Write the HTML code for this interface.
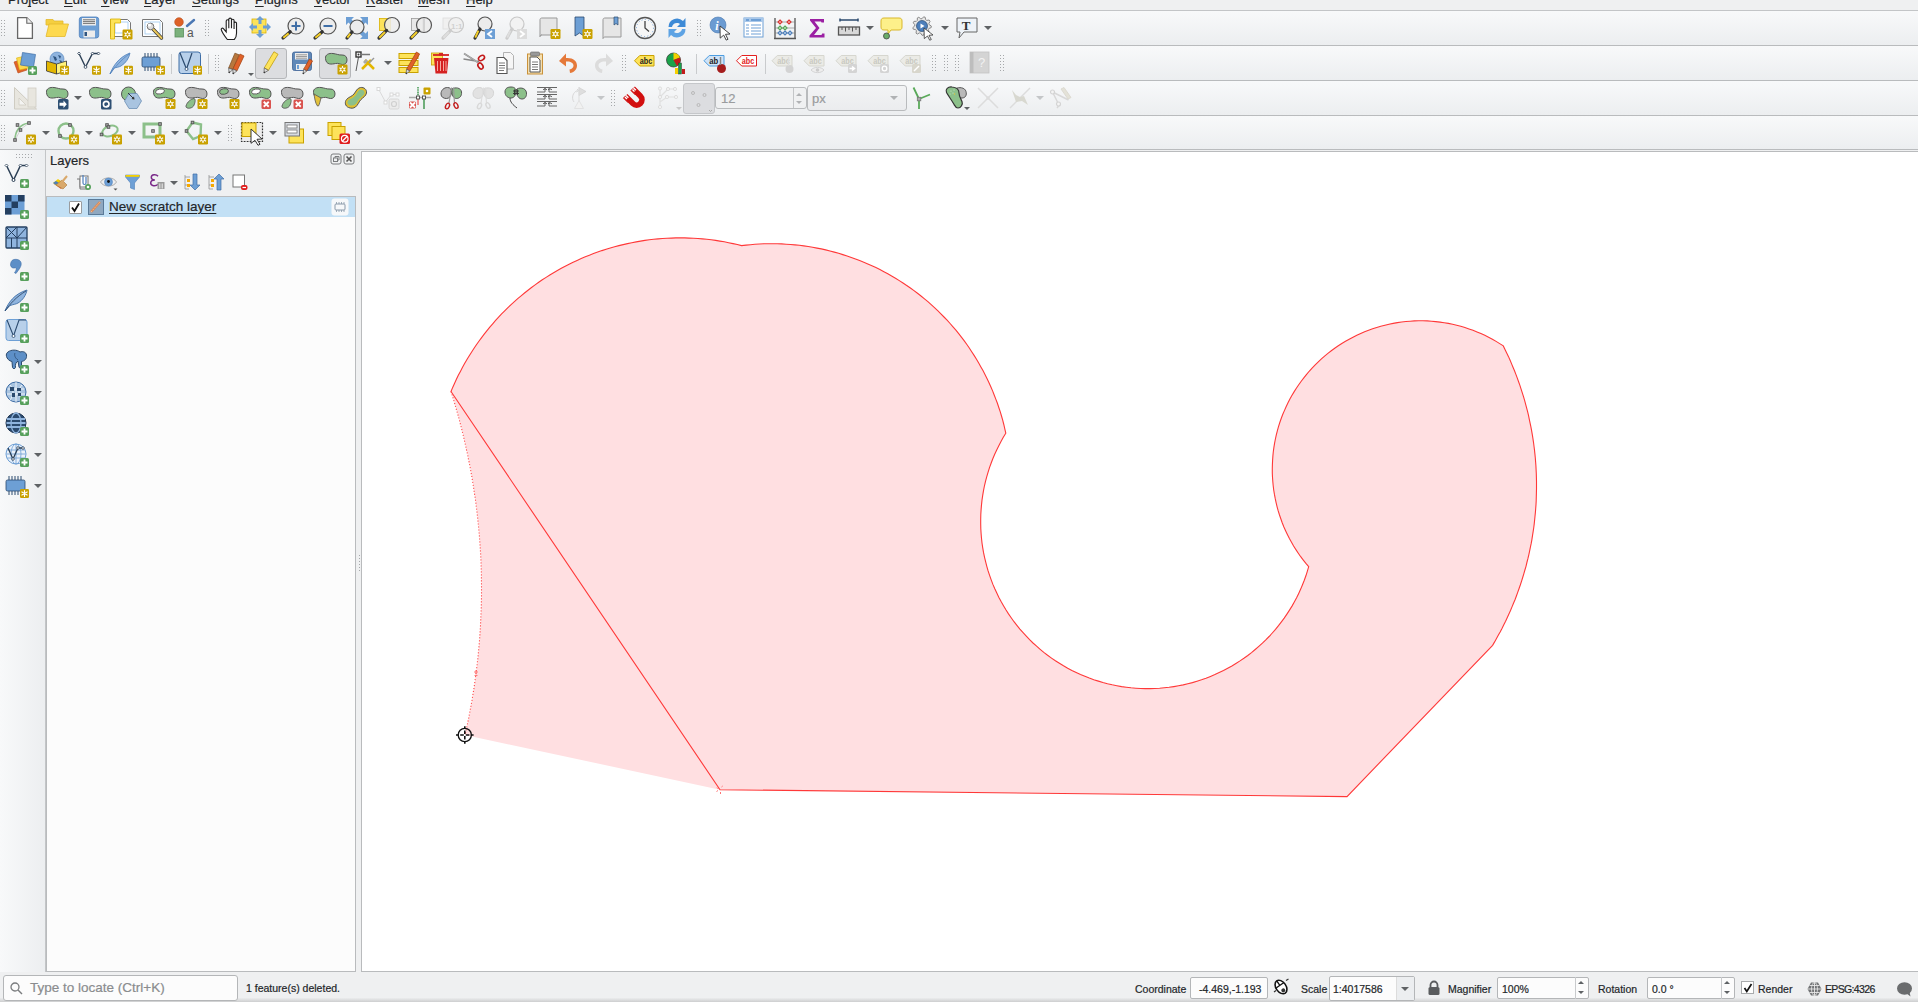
<!DOCTYPE html><html><head><meta charset="utf-8"><style>
*{box-sizing:border-box;margin:0;padding:0}
html,body{width:1918px;height:1002px;overflow:hidden;background:#eff0f1;font-family:"Liberation Sans",sans-serif;color:#232629;position:relative}
.a{position:absolute}
.tb{position:absolute;left:0;width:1918px;background:linear-gradient(#f8f9fa,#eceef0);border-bottom:1px solid #b9bbbd}
.grip{position:absolute;width:5px;background-image:radial-gradient(circle,#b5b7b9 0.8px,transparent 1.1px);background-size:4px 4px}
.vgrip{position:absolute;height:5px;background-image:radial-gradient(circle,#b5b7b9 0.8px,transparent 1.1px);background-size:4px 4px}
.dd{position:absolute;width:0;height:0;border-left:4px solid transparent;border-right:4px solid transparent;border-top:4px solid #5f6265}
.sep{position:absolute;width:1px;background:#c9cbcd}
.t{position:absolute;white-space:nowrap;line-height:1;-webkit-text-stroke:0.2px currentColor}
svg.i{position:absolute;width:24px;height:24px;overflow:visible}
.menu span{-webkit-text-stroke:0.2px #232629;position:absolute;top:-7.4px;font-size:13px;line-height:13px}
.menu u{text-decoration:underline;text-underline-offset:2.2px;text-decoration-skip-ink:none}
</style></head><body>
<div class="a" style="left:0;top:0;width:1918px;height:11px;background:#eff0f1;border-bottom:1px solid #c3c5c7"></div>
<div class="menu">
<span style="left:8px">Pro<u>j</u>ect</span>
<span style="left:64px"><u>E</u>dit</span>
<span style="left:101px"><u>V</u>iew</span>
<span style="left:144px"><u>L</u>ayer</span>
<span style="left:192px"><u>S</u>ettings</span>
<span style="left:255px"><u>P</u>lugins</span>
<span style="left:314px"><u>V</u>ector</span>
<span style="left:366px"><u>R</u>aster</span>
<span style="left:418px"><u>M</u>esh</span>
<span style="left:466px"><u>H</u>elp</span>
</div>
<div class="tb" style="top:11px;height:35px"></div>
<div class="tb" style="top:46px;height:35px"></div>
<div class="tb" style="top:81px;height:35px"></div>
<div class="tb" style="top:116px;height:34px"></div>
<div class="a" style="left:0;top:150px;width:46px;height:822px;background:linear-gradient(90deg,#f8f9fa,#eceef0)"></div>
<div class="a" style="left:46px;top:150px;width:315px;height:822px;background:#eff0f1"></div>
<div class="a" style="left:45px;top:150px;width:1px;height:822px;background:#c3c5c7"></div>
<div class="t" style="left:50px;top:153px;font-size:13px;line-height:16px">Layers</div>
<div class="a" style="left:46px;top:196px;width:310px;height:776px;background:#fcfcfc;border:1px solid #b9bbbd"></div>
<div class="a" style="left:47px;top:197px;width:308px;height:20px;background:#c2e0f5"></div>
<div class="a" style="left:361px;top:151px;width:1557px;height:821px;background:#fff;border-left:1px solid #b9bbbd;border-top:1px solid #b9bbbd;border-bottom:1px solid #b9bbbd"></div>
<svg class="a" style="left:0;top:0" width="1918" height="1002" viewBox="0 0 1918 1002">
<defs><clipPath id="mc"><rect x="362" y="152" width="1556" height="819"/></clipPath></defs><g clip-path="url(#mc)">
<path d="M451.0 391.5 L452.3 395.6 L453.6 399.8 L454.8 404.0 L456.0 408.1 L457.2 412.3 L458.4 416.5 L459.5 420.7 L460.6 424.9 L461.7 429.1 L462.7 433.3 L463.8 437.6 L464.7 441.8 L465.7 446.0 L466.6 450.3 L467.6 454.5 L468.4 458.8 L469.3 463.1 L470.1 467.3 L470.9 471.6 L471.7 475.9 L472.4 480.2 L473.1 484.5 L473.8 488.8 L474.4 493.1 L475.1 497.4 L475.7 501.7 L476.2 506.0 L476.8 510.3 L477.3 514.6 L477.8 518.9 L478.2 523.3 L478.6 527.6 L479.0 531.9 L479.4 536.2 L479.7 540.6 L480.0 544.9 L480.3 549.3 L480.6 553.6 L480.8 557.9 L481.0 562.3 L481.1 566.6 L481.3 571.0 L481.4 575.3 L481.4 579.7 L481.5 584.0 L481.5 588.4 L481.5 592.7 L481.5 597.1 L481.4 601.4 L481.3 605.8 L481.2 610.1 L481.0 614.5 L480.8 618.8 L480.6 623.1 L480.4 627.5 L480.1 631.8 L479.8 636.2 L479.5 640.5 L479.1 644.8 L478.7 649.2 L478.3 653.5 L477.9 657.8 L477.4 662.1 L476.9 666.5 L476.4 670.8 L475.8 675.1 L475.2 679.4 L474.6 683.7 L474.0 688.0 L473.3 692.3 L472.6 696.6 L471.9 700.9 L471.1 705.2 L470.3 709.5 L469.5 713.7 L468.7 718.0 L467.8 722.3 L466.9 726.5 L466.0 730.8 L465.0 735.0 L720.0 789.7 Z" fill="#ffdfe1" stroke="none"/>
<path d="M451.0 391.5 L452.7 387.4 L454.5 383.4 L456.4 379.3 L458.3 375.3 L460.4 371.4 L462.4 367.5 L464.6 363.6 L466.8 359.8 L469.1 356.0 L471.5 352.2 L473.9 348.5 L476.4 344.8 L478.9 341.2 L481.6 337.6 L484.2 334.1 L487.0 330.6 L489.8 327.2 L492.7 323.8 L495.6 320.4 L498.6 317.2 L501.6 313.9 L504.7 310.8 L507.9 307.7 L511.1 304.6 L514.4 301.6 L517.7 298.7 L521.1 295.8 L524.5 293.0 L528.0 290.2 L531.5 287.5 L535.1 284.9 L538.7 282.3 L542.3 279.8 L546.1 277.4 L549.8 275.0 L553.6 272.7 L557.4 270.5 L561.3 268.3 L565.2 266.2 L569.1 264.2 L573.1 262.3 L577.1 260.4 L581.2 258.6 L585.3 256.8 L589.4 255.2 L593.5 253.6 L597.7 252.1 L601.9 250.6 L606.1 249.3 L610.3 248.0 L614.6 246.8 L618.9 245.6 L623.2 244.6 L627.5 243.6 L631.8 242.7 L636.2 241.9 L640.5 241.1 L644.9 240.4 L649.3 239.8 L653.7 239.3 L658.1 238.9 L662.5 238.5 L667.0 238.3 L671.4 238.1 L675.8 237.9 L680.2 237.9 L684.7 237.9 L689.1 238.1 L693.5 238.3 L697.9 238.5 L702.4 238.9 L706.8 239.3 L711.2 239.8 L715.6 240.4 L719.9 241.1 L724.3 241.8 L728.6 242.7 L733.0 243.6 L737.3 244.5 L741.6 245.6 L746.0 245.1 L750.5 244.7 L754.9 244.3 L759.3 244.0 L763.8 243.8 L768.2 243.7 L772.7 243.7 L777.2 243.8 L781.6 243.9 L786.1 244.2 L790.5 244.5 L794.9 244.9 L799.4 245.3 L803.8 245.9 L808.2 246.5 L812.6 247.3 L817.0 248.1 L821.3 248.9 L825.7 249.9 L830.0 251.0 L834.3 252.1 L838.6 253.3 L842.8 254.6 L847.1 255.9 L851.3 257.4 L855.5 258.9 L859.6 260.5 L863.8 262.2 L867.8 263.9 L871.9 265.7 L875.9 267.6 L879.9 269.6 L883.9 271.7 L887.8 273.8 L891.6 276.0 L895.5 278.3 L899.3 280.6 L903.0 283.0 L906.7 285.5 L910.4 288.0 L914.0 290.6 L917.5 293.3 L921.0 296.0 L924.5 298.8 L927.9 301.7 L931.2 304.7 L934.5 307.6 L937.7 310.7 L940.9 313.8 L944.0 317.0 L947.1 320.2 L950.1 323.5 L953.0 326.8 L955.9 330.2 L958.7 333.7 L961.4 337.2 L964.1 340.7 L966.7 344.3 L969.3 348.0 L971.7 351.7 L974.1 355.4 L976.5 359.2 L978.7 363.0 L980.9 366.9 L983.1 370.8 L985.1 374.7 L987.1 378.7 L989.0 382.7 L990.8 386.8 L992.6 390.9 L994.2 395.0 L995.8 399.1 L997.4 403.3 L998.8 407.5 L1000.2 411.7 L1001.5 416.0 L1002.7 420.2 L1003.8 424.5 L1004.8 428.9 L1005.8 433.2 L1003.3 437.3 L1001.0 441.4 L998.8 445.7 L996.7 450.0 L994.7 454.3 L992.8 458.7 L991.1 463.2 L989.5 467.6 L988.1 472.2 L986.7 476.8 L985.5 481.4 L984.4 486.0 L983.5 490.7 L982.7 495.4 L982.0 500.1 L981.5 504.9 L981.1 509.6 L980.8 514.4 L980.7 519.2 L980.7 523.9 L980.8 528.7 L981.1 533.5 L981.5 538.2 L982.0 543.0 L982.7 547.7 L983.5 552.4 L984.5 557.1 L985.6 561.7 L986.8 566.3 L988.1 570.9 L989.6 575.4 L991.2 579.9 L992.9 584.4 L994.8 588.8 L996.8 593.1 L998.9 597.4 L1001.1 601.6 L1003.5 605.8 L1005.9 609.8 L1008.5 613.9 L1011.2 617.8 L1014.0 621.7 L1016.9 625.4 L1019.9 629.1 L1023.1 632.7 L1026.3 636.2 L1029.6 639.7 L1033.0 643.0 L1036.6 646.2 L1040.2 649.3 L1043.8 652.4 L1047.6 655.3 L1051.5 658.1 L1055.4 660.8 L1059.4 663.3 L1063.5 665.8 L1067.7 668.2 L1071.9 670.4 L1076.2 672.5 L1080.5 674.5 L1084.9 676.3 L1089.3 678.1 L1093.8 679.7 L1098.4 681.1 L1102.9 682.5 L1107.5 683.7 L1112.2 684.8 L1116.9 685.7 L1121.6 686.6 L1126.3 687.2 L1131.0 687.8 L1135.8 688.2 L1140.5 688.5 L1145.3 688.6 L1150.1 688.6 L1154.8 688.5 L1159.6 688.2 L1164.3 687.8 L1169.1 687.3 L1173.8 686.6 L1178.5 685.8 L1183.2 684.9 L1187.8 683.8 L1192.4 682.6 L1197.0 681.2 L1201.5 679.8 L1206.0 678.2 L1210.5 676.4 L1214.9 674.6 L1219.2 672.6 L1223.5 670.5 L1227.7 668.3 L1231.9 666.0 L1235.9 663.5 L1240.0 660.9 L1243.9 658.3 L1247.8 655.5 L1251.5 652.6 L1255.2 649.5 L1258.8 646.4 L1262.4 643.2 L1265.8 639.9 L1269.1 636.5 L1272.3 633.0 L1275.5 629.4 L1278.5 625.7 L1281.4 621.9 L1284.2 618.1 L1286.9 614.1 L1289.5 610.1 L1292.0 606.1 L1294.3 601.9 L1296.6 597.7 L1298.7 593.4 L1300.7 589.1 L1302.5 584.7 L1304.3 580.3 L1305.9 575.8 L1307.3 571.3 L1308.7 566.7 L1305.9 563.4 L1303.3 560.1 L1300.7 556.7 L1298.3 553.2 L1295.9 549.6 L1293.6 546.0 L1291.5 542.3 L1289.4 538.6 L1287.5 534.7 L1285.7 530.9 L1283.9 527.0 L1282.3 523.0 L1280.9 519.0 L1279.5 515.0 L1278.2 510.9 L1277.1 506.8 L1276.1 502.6 L1275.2 498.4 L1274.4 494.2 L1273.7 490.0 L1273.2 485.8 L1272.8 481.5 L1272.5 477.3 L1272.3 473.0 L1272.3 468.7 L1272.4 464.4 L1272.6 460.2 L1272.9 455.9 L1273.3 451.7 L1273.9 447.4 L1274.6 443.2 L1275.4 439.0 L1276.3 434.9 L1277.4 430.7 L1278.5 426.6 L1279.8 422.5 L1281.2 418.5 L1282.7 414.5 L1284.4 410.6 L1286.1 406.7 L1288.0 402.8 L1289.9 399.0 L1292.0 395.3 L1294.2 391.6 L1296.5 388.0 L1298.9 384.5 L1301.4 381.0 L1304.0 377.6 L1306.6 374.3 L1309.4 371.0 L1312.3 367.9 L1315.2 364.8 L1318.3 361.8 L1321.4 358.9 L1324.6 356.1 L1327.9 353.4 L1331.3 350.8 L1334.7 348.2 L1338.3 345.8 L1341.8 343.5 L1345.5 341.3 L1349.2 339.2 L1353.0 337.2 L1356.8 335.3 L1360.7 333.5 L1364.6 331.8 L1368.6 330.3 L1372.6 328.8 L1376.7 327.5 L1380.8 326.3 L1384.9 325.2 L1389.0 324.2 L1393.2 323.4 L1397.4 322.6 L1401.6 322.0 L1405.9 321.5 L1410.1 321.2 L1414.4 320.9 L1418.7 320.8 L1422.9 320.8 L1427.2 320.9 L1431.5 321.2 L1435.7 321.6 L1440.0 322.1 L1444.2 322.7 L1448.4 323.4 L1452.6 324.3 L1456.7 325.2 L1460.8 326.3 L1464.9 327.5 L1469.0 328.9 L1473.0 330.3 L1477.0 331.9 L1480.9 333.6 L1484.8 335.3 L1488.6 337.2 L1492.4 339.2 L1496.1 341.4 L1499.7 343.6 L1503.3 345.9 L1505.0 349.4 L1506.7 352.9 L1508.4 356.4 L1510.0 360.0 L1511.5 363.6 L1513.0 367.2 L1514.5 370.8 L1515.9 374.4 L1517.3 378.1 L1518.6 381.8 L1519.9 385.4 L1521.1 389.1 L1522.3 392.9 L1523.5 396.6 L1524.6 400.3 L1525.6 404.1 L1526.6 407.9 L1527.6 411.7 L1528.5 415.4 L1529.3 419.3 L1530.1 423.1 L1530.9 426.9 L1531.6 430.7 L1532.3 434.6 L1532.9 438.4 L1533.5 442.3 L1534.0 446.2 L1534.5 450.1 L1534.9 453.9 L1535.3 457.8 L1535.6 461.7 L1535.9 465.6 L1536.1 469.5 L1536.3 473.4 L1536.4 477.3 L1536.5 481.2 L1536.5 485.1 L1536.5 489.0 L1536.4 492.9 L1536.3 496.8 L1536.2 500.7 L1536.0 504.6 L1535.7 508.5 L1535.4 512.4 L1535.0 516.3 L1534.6 520.2 L1534.2 524.1 L1533.7 528.0 L1533.1 531.8 L1532.5 535.7 L1531.9 539.6 L1531.2 543.4 L1530.4 547.2 L1529.6 551.1 L1528.8 554.9 L1527.9 558.7 L1526.9 562.5 L1526.0 566.3 L1524.9 570.0 L1523.8 573.8 L1522.7 577.5 L1521.5 581.3 L1520.3 585.0 L1519.0 588.7 L1517.7 592.4 L1516.4 596.0 L1515.0 599.7 L1513.5 603.3 L1512.0 606.9 L1510.5 610.5 L1508.9 614.1 L1507.2 617.7 L1505.6 621.2 L1503.8 624.7 L1502.1 628.2 L1500.3 631.7 L1498.4 635.1 L1496.5 638.5 L1494.6 641.9 L1492.6 645.3 L1347.0 796.6 L720.0 789.7 L451.0 391.5 Z" fill="#ffdfe1" stroke="#ff3838" stroke-width="1.1"/>
<path d="M451.0 391.5 L452.3 395.6 L453.6 399.8 L454.8 404.0 L456.0 408.1 L457.2 412.3 L458.4 416.5 L459.5 420.7 L460.6 424.9 L461.7 429.1 L462.7 433.3 L463.8 437.6 L464.7 441.8 L465.7 446.0 L466.6 450.3 L467.6 454.5 L468.4 458.8 L469.3 463.1 L470.1 467.3 L470.9 471.6 L471.7 475.9 L472.4 480.2 L473.1 484.5 L473.8 488.8 L474.4 493.1 L475.1 497.4 L475.7 501.7 L476.2 506.0 L476.8 510.3 L477.3 514.6 L477.8 518.9 L478.2 523.3 L478.6 527.6 L479.0 531.9 L479.4 536.2 L479.7 540.6 L480.0 544.9 L480.3 549.3 L480.6 553.6 L480.8 557.9 L481.0 562.3 L481.1 566.6 L481.3 571.0 L481.4 575.3 L481.4 579.7 L481.5 584.0 L481.5 588.4 L481.5 592.7 L481.5 597.1 L481.4 601.4 L481.3 605.8 L481.2 610.1 L481.0 614.5 L480.8 618.8 L480.6 623.1 L480.4 627.5 L480.1 631.8 L479.8 636.2 L479.5 640.5 L479.1 644.8 L478.7 649.2 L478.3 653.5 L477.9 657.8 L477.4 662.1 L476.9 666.5 L476.4 670.8 L475.8 675.1 L475.2 679.4 L474.6 683.7 L474.0 688.0 L473.3 692.3 L472.6 696.6 L471.9 700.9 L471.1 705.2 L470.3 709.5 L469.5 713.7 L468.7 718.0 L467.8 722.3 L466.9 726.5 L466.0 730.8 L465.0 735.0" fill="none" stroke="#ff4a4a" stroke-width="1.1" stroke-dasharray="1.1 1.9"/>
<g stroke="#111" fill="none"><circle cx="464.8" cy="735" r="6.6" stroke-width="1.35"/><path d="M464.8 726.2v2.8M464.8 741v2.8M456 735h2.8M470.8 735h2.8" stroke-width="1.6"/><path d="M464.8 730.4v3.6M464.8 736v3.6M460.2 735h3.6M465.8 735h3.6" stroke-width="1.6"/></g>
<path d="M474 672h4M476 670v4M474.5 675.5h3" stroke="#ff6060" stroke-width=".8" fill="none"/>
<path d="M717 787.5l1.5 1.5M721.5 787l1.2-1M716.5 791.5l1.5-1M720.5 792v2" stroke="#ff5050" stroke-width=".8"/>
</g></svg>
<div class="dd" style="left:866px;top:26px"></div>
<div class="dd" style="left:941px;top:26px"></div>
<div class="dd" style="left:984px;top:26px"></div>
<div class="sep" style="left:171px;top:54px;height:20px"></div>
<div class="sep" style="left:208px;top:54px;height:20px"></div>
<div class="sep" style="left:696px;top:54px;height:20px"></div>
<div class="sep" style="left:765px;top:54px;height:20px"></div>
<div class="a" style="left:255px;top:48px;width:32px;height:31px;background:#dcdde0;border:1px solid #b5b7ba;border-radius:3px"></div>
<div class="a" style="left:319px;top:48px;width:32px;height:31px;background:#dcdde0;border:1px solid #b5b7ba;border-radius:3px"></div>
<div class="dd" style="left:384px;top:61px"></div>
<div class="dd" style="left:248px;top:73px;border-width:3px 3px 0 3px"></div>
<div class="dd" style="left:74px;top:96px"></div>
<div class="dd" style="left:597px;top:96px;border-top-color:#c4c6c8"></div>
<div class="dd" style="left:1036px;top:96px;border-top-color:#c4c6c8"></div>
<div class="dd" style="left:676px;top:107px;border-width:3px 3px 0 3px;border-top-color:#c8c8c8"></div>
<div class="dd" style="left:964px;top:107px;border-width:3px 3px 0 3px"></div>
<div class="a" style="left:683px;top:83px;width:32px;height:31px;background:#dcdde0;border:1px solid #c5c7ca;border-radius:3px"></div>
<svg class="a" style="left:683px;top:83px" width="32" height="31"><g fill="none" stroke="#b8b8b8" stroke-width="1"><circle cx="10" cy="10" r="1.5"/><circle cx="21.5" cy="12" r="1.5"/><circle cx="15.5" cy="22" r="1.5"/></g><path d="M26 27l1.5 1.5 1.5-1.5" stroke="#aaa" fill="none"/></svg>
<div class="a" style="left:715px;top:87px;width:92px;height:22px;background:#f0f1f2;border:1px solid #b9bbbd;border-radius:3px"></div>
<div class="a" style="left:793px;top:88px;width:1px;height:20px;background:#c4c6c8"></div>
<div class="dd" style="left:796px;top:93px;border-width:0 3.5px 3.5px 3.5px;border-top:0;border-bottom:3.5px solid #b0b2b4"></div>
<div class="dd" style="left:796px;top:101px;border-width:3.5px 3.5px 0 3.5px;border-top-color:#b0b2b4"></div>
<div class="t" style="left:721px;top:92px;font-size:13px;color:#9a9c9e">12</div>
<div class="a" style="left:807px;top:85px;width:100px;height:26px;background:linear-gradient(#f3f4f5,#ebecee);border:1px solid #b9bbbd;border-radius:3px"></div>
<div class="t" style="left:812px;top:92px;font-size:13px;color:#9a9c9e">px</div>
<div class="dd" style="left:890px;top:96px;border-top-color:#b0b2b4"></div>
<div class="dd" style="left:42px;top:131px"></div>
<div class="dd" style="left:85px;top:131px"></div>
<div class="dd" style="left:128px;top:131px"></div>
<div class="dd" style="left:171px;top:131px"></div>
<div class="dd" style="left:214px;top:131px"></div>
<div class="dd" style="left:269px;top:131px"></div>
<div class="dd" style="left:312px;top:131px"></div>
<div class="dd" style="left:355px;top:131px"></div>
<div class="dd" style="left:34px;top:360px"></div>
<div class="dd" style="left:34px;top:391px"></div>
<div class="dd" style="left:34px;top:453px"></div>
<div class="dd" style="left:34px;top:484px"></div>
<div class="dd" style="left:170px;top:181px"></div>
<svg class="a" style="left:330px;top:153px" width="26" height="13"><rect x="1" y="1" width="10" height="10" rx="2" fill="none" stroke="#7a7c7e" stroke-width="1"/><rect x="3.5" y="5" width="4" height="3.5" fill="none" stroke="#7a7c7e" stroke-width="1"/><path d="M5 5V3.5h4v3.5H7.5" fill="none" stroke="#7a7c7e" stroke-width="1"/><rect x="14" y="1" width="10" height="10" rx="2" fill="none" stroke="#7a7c7e" stroke-width="1"/><path d="M16.5 3.5l5 5M21.5 3.5l-5 5" stroke="#555" stroke-width="1.6"/></svg>
<div class="a" style="left:69px;top:201px;width:13px;height:13px;background:#fff;border:1px solid #9a9c9e;border-radius:1px"></div>
<svg class="a" style="left:70px;top:202px" width="11" height="11"><path d="M2 5.5l2.5 3.5L9 1.5" fill="none" stroke="#111" stroke-width="1.8"/></svg>
<svg class="a" style="left:88px;top:199px" width="16" height="16"><rect x="0.5" y="0.5" width="15" height="15" fill="#8fa8c0" stroke="#5a7a98" stroke-width="1"/><path d="M3 13l9-10" stroke="#d98a5a" stroke-width="2.5"/><path d="M3 13l9-10" stroke="#f0c090" stroke-width="1" stroke-dasharray="1.5 1"/></svg>
<div class="t" style="left:109px;top:200px;font-size:13.5px;text-decoration:underline;text-underline-offset:2px">New scratch layer</div>
<svg class="a" style="left:331px;top:198px" width="18" height="18"><rect x="0.5" y="0.5" width="17" height="17" rx="3" fill="#f6f8fa"/><rect x="4" y="6" width="10" height="6" rx="1" fill="none" stroke="#8a9aaa" stroke-width="1"/><path d="M5.5 4v2M8 4v2M10.5 4v2M13 4v2M5.5 12v2M8 12v2M10.5 12v2M13 12v2" stroke="#8a9aaa" stroke-width=".8"/></svg>
<div class="a" style="left:0;top:998px;width:1918px;height:4px;background:linear-gradient(#ebeced,#cdcecf)"></div>
<div class="a" style="left:3px;top:975px;width:235px;height:26px;background:#fcfcfc;border:1px solid #b4b6b8;border-radius:3px"></div>
<svg class="a" style="left:10px;top:982px" width="14" height="13"><circle cx="5" cy="5" r="4" fill="none" stroke="#7a7c7e" stroke-width="1.3"/><path d="M8 8l4 4" stroke="#7a7c7e" stroke-width="1.5"/></svg>
<div class="t" style="left:30px;top:981px;font-size:13.5px;color:#8a8c8e">Type to locate (Ctrl+K)</div>
<div class="t" style="left:246px;top:983px;font-size:10.5px">1 feature(s) deleted.</div>
<div class="t" style="left:1135px;top:984px;font-size:10.5px">Coordinate</div>
<div class="a" style="left:1190px;top:977px;width:78px;height:22px;background:#fcfcfc;border:1px solid #b4b6b8;border-radius:2px"></div>
<div class="t" style="left:1199px;top:984px;font-size:10.5px">-4.469,-1.193</div>
<div class="t" style="left:1301px;top:984px;font-size:10.5px">Scale</div>
<div class="a" style="left:1329px;top:976px;width:86px;height:25px;background:#fcfcfc;border:1px solid #b4b6b8;border-radius:2px"></div>
<div class="a" style="left:1396px;top:977px;width:18px;height:23px;background:#eceef0;border-left:1px solid #dcdcdc"></div>
<div class="dd" style="left:1401px;top:987px;border-width:4px 4px 0 4px"></div>
<div class="t" style="left:1333px;top:984px;font-size:10.5px">1:4017586</div>
<div class="t" style="left:1448px;top:984px;font-size:10.5px">Magnifier</div>
<div class="a" style="left:1497px;top:977px;width:92px;height:22px;background:#fcfcfc;border:1px solid #b4b6b8;border-radius:2px"></div>
<div class="a" style="left:1575px;top:977px;width:1px;height:22px;background:#c9cbcd"></div>
<div class="t" style="left:1502px;top:984px;font-size:10.5px">100%</div>
<div class="t" style="left:1598px;top:984px;font-size:10.5px">Rotation</div>
<div class="a" style="left:1647px;top:977px;width:88px;height:22px;background:#fcfcfc;border:1px solid #b4b6b8;border-radius:2px"></div>
<div class="a" style="left:1721px;top:977px;width:1px;height:22px;background:#c9cbcd"></div>
<div class="t" style="left:1652px;top:984px;font-size:10.5px">0.0 °</div>
<div class="a" style="left:1741px;top:981px;width:13px;height:13px;background:#fff;border:1px solid #a9abad"></div>
<svg class="a" style="left:1742px;top:982px" width="12" height="12"><path d="M2.5 6l2.3 3.5L9.5 2" fill="none" stroke="#111" stroke-width="1.7"/></svg>
<div class="t" style="left:1758px;top:984px;font-size:10.5px">Render</div>
<div class="t" style="left:1825px;top:984px;font-size:10.5px;letter-spacing:-0.65px">EPSG:4326</div>
<svg class="a" style="left:1270px;top:976px" width="22" height="22"><g transform="rotate(-35 11 11)"><ellipse cx="11" cy="11" rx="5" ry="7.5" fill="#fff" stroke="#111" stroke-width="1.6"/><path d="M6 9h10M11 3.5V9" stroke="#111" stroke-width="1.4"/><circle cx="11" cy="15" r="2" fill="#333"/></g><path d="M4 16l2-1.5M16 4.5l2.5-1.5" stroke="#333" stroke-width="1.2"/></svg>
<svg class="a" style="left:1427px;top:980px" width="14" height="16"><path d="M3.5 7V5a3.5 3.5 0 0 1 7 0v2" fill="none" stroke="#5a5c5e" stroke-width="1.8"/><rect x="1.5" y="7" width="11" height="8" rx="1.5" fill="#5a5c5e"/></svg>
<div class="dd" style="left:1578px;top:981px;border-width:0 3.5px 3.5px 3.5px;border-top:0;border-bottom:3.5px solid #5f6265"></div>
<div class="dd" style="left:1578px;top:991px;border-width:3.5px 3.5px 0 3.5px"></div>
<div class="dd" style="left:1724px;top:981px;border-width:0 3.5px 3.5px 3.5px;border-top:0;border-bottom:3.5px solid #5f6265"></div>
<div class="dd" style="left:1724px;top:991px;border-width:3.5px 3.5px 0 3.5px"></div>
<svg class="a" style="left:1806px;top:981px" width="17" height="16"><path d="M5 1.5h7l3.5 6.5-3.5 6.5H5L1.5 8z" fill="#727476"/><path d="M1.5 8h14M8.5 1.5v13M3.5 4.5h10M3.5 11.5h10" stroke="#e8e8e8" stroke-width=".9"/><ellipse cx="8.5" cy="8" rx="3" ry="6.5" fill="none" stroke="#e8e8e8" stroke-width=".8"/></svg>
<svg class="a" style="left:1896px;top:981px" width="18" height="17"><ellipse cx="8.5" cy="7.5" rx="7.5" ry="6.2" fill="#6a6c6e"/><path d="M10 12l4.5 3.5-1-4.5z" fill="#6a6c6e"/></svg>
<svg class="a" style="left:0;top:0" width="1918" height="1002">
<g transform="translate(13 16)"><path d="M4.6 1.6h9.2l5.6 5.6v15.2h-14.8z" fill="#fff" stroke="#666" stroke-width="1.3" stroke-linejoin="round"/><path d="M13.8 1.6v5.6h5.6" fill="#f0f0f0" stroke="#666" stroke-width="1.1"/></g>
<g transform="translate(45 16)"><path d="M1 3.5h7l1 1.5h9v4h-17z" fill="#f5cf40" stroke="#e3b92c" stroke-width=".8"/><path d="M4 8h19.5l-3.5 12.5h-19z" fill="#fdd94f" stroke="#e3b92c" stroke-width=".8"/></g>
<g transform="translate(77 16)"><rect x="2.3" y="1" width="19.4" height="21" rx="2.5" fill="#6d9fd5" stroke="#4d7fbb" stroke-width=".8"/><rect x="5" y="2" width="14" height="7.5" fill="#ececec"/><path d="M6 3.8h12M6 5.6h12M6 7.4h12" stroke="#555" stroke-width=".8"/><rect x="6.5" y="14.5" width="11.5" height="7" fill="#ececec"/><rect x="7.5" y="16" width="2.5" height="4" fill="#2f5580"/></g>
<g transform="translate(109 16)"><path d="M1.5 3.5h17l3 3v14h-20z" fill="#fff" stroke="#777" stroke-width="1"/><rect x="6" y="6" width="13" height="11" fill="none" stroke="#9cc8f0" stroke-width=".8"/><path d="M1.5 3h10v4h-6v16h-4z" fill="#fde35a" stroke="#d9b100" stroke-width=".8"/><rect x="13.5" y="13.5" width="10" height="10" rx="1.2" fill="#c9a100"/><g stroke="#fff" stroke-width="1.1"><path d="M18.5 14.9v7.2M15.4 16.7l6.2 3.6M15.4 20.3l6.2 -3.6"/></g><circle cx="18.5" cy="18.5" r="1.7" fill="#c9a100" stroke="#fff" stroke-width="1"/></g>
<g transform="translate(141 16)"><path d="M1.5 3.5h17l3 3v14h-20z" fill="#fff" stroke="#777" stroke-width="1"/><rect x="4" y="6" width="15" height="12" fill="none" stroke="#9cc8f0" stroke-width=".8"/><path d="M11 12l9.5 10" stroke="#333" stroke-width="3.4" stroke-linecap="round"/><path d="M11 12l9.5 10" stroke="#e8c65a" stroke-width="2" stroke-linecap="round"/><circle cx="9.5" cy="10.5" r="3.3" fill="#ddd" stroke="#777" stroke-width="1"/><circle cx="8.5" cy="9" r="1.6" fill="#fff"/></g>
<g transform="translate(173 16)"><circle cx="6" cy="6" r="4.3" fill="#dd6127" stroke="#b84a18" stroke-width=".6"/><path d="M14 10l7-6" stroke="#4b78b4" stroke-width="2.4" stroke-linecap="round"/><rect x="2" y="12.5" width="8.5" height="8.5" fill="#7bb17c" stroke="#5a8f5c" stroke-width=".8"/><text x="14" y="21" font-size="12" font-family="Liberation Sans" fill="#555">a</text></g>
<g transform="translate(217 16)"><g transform="translate(2.5 0) scale(1.12)"><path d="M7 21c-2-2.5-5-7-5.5-9 0-1.2 1.2-1.6 2-.8l2.5 3V4.5c0-1.5 2.3-1.5 2.3 0V11V3c0-1.5 2.4-1.5 2.4 0v8V4c0-1.5 2.3-1.5 2.3 0v7.5V6.5c0-1.4 2.2-1.4 2.2 0v9c0 2.5-1 4.5-2 5.5z" fill="#fff" stroke="#222" stroke-width="1"/></g></g>
<g transform="translate(249 16)"><rect x="3" y="3" width="14" height="14" fill="#fde35a" stroke="#d9b100" stroke-width=".8"/><g fill="#6d9fd5"><path d="M11 0l-4 4h2.5v4h3V4H15z"/><path d="M11 22l-4-4h2.5v-4h3v4H15z"/><path d="M0 11l4-4v2.5h4v3H4V15z"/><path d="M22 11l-4-4v2.5h-4v3h4V15z"/></g></g>
<g transform="translate(281 16)"><circle cx="15" cy="10" r="8" fill="#ececec" stroke="#555" stroke-width="1.2"/><path d="M9.24 15.76L2 22" stroke="#333" stroke-width="3.2" stroke-linecap="round"/><path d="M7.64 17.36L2.3 21.7" stroke="#f4cf2a" stroke-width="2" stroke-linecap="butt"/><path d="M15 5.5v9M10.5 10h9" stroke="#3f6ea6" stroke-width="2"/></g>
<g transform="translate(313 16)"><circle cx="15" cy="10" r="8" fill="#ececec" stroke="#555" stroke-width="1.2"/><path d="M9.24 15.76L2 22" stroke="#333" stroke-width="3.2" stroke-linecap="round"/><path d="M7.64 17.36L2.3 21.7" stroke="#f4cf2a" stroke-width="2" stroke-linecap="butt"/><path d="M10.5 10h9" stroke="#3f6ea6" stroke-width="2"/></g>
<g transform="translate(345 16)"><g fill="#6d9fd5"><path d="M1 1h8l-2.5 2.5 3 3-3 3-3-3L1 9z"/><path d="M23 1h-8l2.5 2.5-3 3 3 3 3-3L23 9z"/><path d="M23 23h-8l2.5-2.5-3-3 3-3 3 3 2.5-2.5z"/></g><circle cx="12" cy="11" r="7" fill="#ececec" stroke="#555" stroke-width="1.2"/><path d="M6.96 16.04L2 22" stroke="#333" stroke-width="3.2" stroke-linecap="round"/><path d="M5.36 17.64L2.3 21.7" stroke="#f4cf2a" stroke-width="2" stroke-linecap="butt"/></g>
<g transform="translate(377 16)"><rect x="2.5" y="2.5" width="11" height="12" fill="#fde35a" stroke="#d9b100" stroke-width=".8"/><circle cx="15" cy="9" r="7.5" fill="rgba(236,236,236,.85)" stroke="#555" stroke-width="1.2"/><path d="M9.6 14.4L2 22" stroke="#333" stroke-width="3.2" stroke-linecap="round"/><path d="M8 16L2.3 21.7" stroke="#f4cf2a" stroke-width="2" stroke-linecap="butt"/></g>
<g transform="translate(409 16)"><rect x="2.5" y="2.5" width="11" height="12" fill="#e8e8e8" stroke="#999" stroke-width=".8"/><circle cx="15" cy="9" r="7.5" fill="rgba(236,236,236,.9)" stroke="#555" stroke-width="1.2"/><path d="M9.6 14.4L2 22" stroke="#333" stroke-width="3.2" stroke-linecap="round"/><path d="M8 16L2.3 21.7" stroke="#f4cf2a" stroke-width="2" stroke-linecap="butt"/><path d="M15 2v14" stroke="#aaa" stroke-width=".8"/></g>
<g transform="translate(441 16)"><rect x="2" y="2" width="9" height="11" fill="#f0f0f0" stroke="#ddd" stroke-width=".8"/><circle cx="15" cy="9" r="7.5" fill="#f0f0f0" stroke="#c8c8c8" stroke-width="1.2"/><path d="M9.6 14.4L2 22" stroke="#ccc" stroke-width="3.2" stroke-linecap="round"/><path d="M8 16L2.3 21.7" stroke="#dedede" stroke-width="2" stroke-linecap="butt"/><text x="10" y="12.5" font-size="8" font-weight="bold" font-family="Liberation Sans" fill="#d0d0d0">1:1</text></g>
<g transform="translate(473 16)"><circle cx="12" cy="8" r="7" fill="#ececec" stroke="#555" stroke-width="1.2"/><path d="M6.96 13.04L2 22" stroke="#333" stroke-width="3.2" stroke-linecap="round"/><path d="M5.36 14.64L2.3 21.7" stroke="#f4cf2a" stroke-width="2" stroke-linecap="butt"/><rect x="12" y="13" width="10" height="10" fill="#6d9fd5"/><path d="M19 15l-4 3 4 3" stroke="#fff" stroke-width="1.8" fill="none"/></g>
<g transform="translate(505 16)"><circle cx="12" cy="8" r="7" fill="#f2f2f2" stroke="#c8c8c8" stroke-width="1.2"/><path d="M6.96 13.04L2 22" stroke="#ccc" stroke-width="3.2" stroke-linecap="round"/><path d="M5.36 14.64L2.3 21.7" stroke="#dedede" stroke-width="2" stroke-linecap="butt"/><rect x="12" y="13" width="10" height="10" fill="#dcdcdc"/><path d="M15 15l4 3-4 3" stroke="#fff" stroke-width="1.8" fill="none"/></g>
<g transform="translate(537 16)"><path d="M3 3.5c0-1 1-1.5 2-1.5h15v17h-15c-1 0-2 .6-2 1.6z" fill="#e6e6e6" stroke="#999" stroke-width="1"/><path d="M3 20.5c0-1 1-1.6 2-1.6" stroke="#999" fill="none"/><rect x="13.5" y="13" width="10" height="10" rx="1.2" fill="#c9a100"/><g stroke="#fff" stroke-width="1.1"><path d="M18.5 14.4v7.2M15.4 16.2l6.2 3.6M15.4 19.8l6.2 -3.6"/></g><circle cx="18.5" cy="18" r="1.7" fill="#c9a100" stroke="#fff" stroke-width="1"/></g>
<g transform="translate(569 16)"><path d="M6 1h9v19l-4.5-3-4.5 3z" fill="#6d9fd5" stroke="#2b4a6e" stroke-width=".8"/><rect x="13.5" y="13" width="10" height="10" rx="1.2" fill="#c9a100"/><g stroke="#fff" stroke-width="1.1"><path d="M18.5 14.4v7.2M15.4 16.2l6.2 3.6M15.4 19.8l6.2 -3.6"/></g><circle cx="18.5" cy="18" r="1.7" fill="#c9a100" stroke="#fff" stroke-width="1"/></g>
<g transform="translate(601 16)"><path d="M2 3.5c0-1 1-1.5 2-1.5h16v19h-16c-1 0-2 .6-2 1.6z" fill="#e6e6e6" stroke="#999" stroke-width="1"/><path d="M13 1h4v8l-2-1.5-2 1.5z" fill="#6d9fd5" stroke="#2b4a6e" stroke-width=".7"/></g>
<g transform="translate(633 16)"><circle cx="12" cy="12" r="10.5" fill="#f6f6f6" stroke="#555" stroke-width="1.3"/><circle cx="12" cy="12" r="8.5" fill="none" stroke="#6d9fd5" stroke-width="1" stroke-dasharray="1 2.3"/><path d="M12 5v7l4 3.5" stroke="#444" stroke-width="1.3" fill="none"/></g>
<g transform="translate(665 16)"><path d="M3.5 11A8.5 8.5 0 0 1 18 5l2.5-3v9h-8.5l3-3A5 5 0 0 0 7 11z" fill="#3d8ad6"/><path d="M20.5 13A8.5 8.5 0 0 1 6 19l-2.5 3v-9h8.5l-3 3A5 5 0 0 0 17 13z" fill="#5ea3e4"/></g>
<g transform="translate(709 16)"><circle cx="9" cy="9" r="8" fill="#6b9bd2" stroke="#4a78b0" stroke-width=".6"/><text x="6.3" y="14" font-size="12" font-weight="bold" font-style="italic" font-family="Liberation Serif" fill="#fff">i</text><path d="M11 10l10 8-4.5.3 2.5 5-1.8.8-2.5-5-3.5 3z" fill="#fff" stroke="#333" stroke-width=".9"/></g>
<g transform="translate(741 16)"><rect x="3" y="2" width="19" height="19" fill="#fff" stroke="#6d9fd5" stroke-width="1"/><rect x="3" y="2" width="19" height="4" fill="#a9c8ea"/><rect x="5" y="3" width="3" height="2" fill="#6d9fd5"/><rect x="10" y="3" width="10" height="2" fill="#6d9fd5"/><path d="M5 9h3M10 9h10M5 12h3M10 12h10M5 15h3M10 15h10M5 18h3M10 18h10" stroke="#6d9fd5" stroke-width="1"/></g>
<g transform="translate(773 16)"><path d="M2 2v20M22 2v20M1 22.5h22" stroke="#555" stroke-width="1.3"/><path d="M2 6h20M2 12h20M2 17h20" stroke="#777" stroke-width=".6"/><g fill="none" stroke-width="1.1"><path d="M7 4l2 2-2 2-2-2zM16 4l2 2-2 2-2-2z" stroke="#d9322f" fill="#fbb"/><path d="M7 10l2 2-2 2-2-2zM12 10l2 2-2 2-2-2z" stroke="#5aa55a" fill="#cec"/><path d="M7 15l2 2-2 2-2-2zM12 15l2 2-2 2-2-2zM17 15l2 2-2 2-2-2z" stroke="#4d7fbb" fill="#cde"/></g></g>
<g transform="translate(805 16)"><path d="M5 3h14v3.5h-2.5l-.5-1h-6.5l5 6.5-5.5 7h7.5l.7-1.5h2.3v4h-15v-2l6.5-7.5-6-7.5z" fill="#9b1fa3"/></g>
<g transform="translate(837 16)"><path d="M3 4h18M3 2.5v3M21 2.5v3" stroke="#2b4a6e" stroke-width="1.5"/><rect x="1.5" y="11" width="21" height="8" fill="#d8d8d8" stroke="#555" stroke-width="1.3"/><path d="M5 11v3M8.5 11v4.5M12 11v3M15.5 11v4.5M19 11v3" stroke="#555" stroke-width="1"/></g>
<g transform="translate(880 16)"><path d="M4 2h15c2 0 3 1 3 3v6c0 2-1 3-3 3h-8l-3 4v-4h-4c-2 0-3-1-3-3v-6c0-2 1-3 3-3z" fill="#fdf08a" stroke="#d9b72a" stroke-width="1"/><circle cx="6.5" cy="20" r="3" fill="#6aac68" stroke="#444" stroke-width=".8"/></g>
<g transform="translate(912 16)"><polygon points="19.30,10.00 19.16,11.61 16.86,12.50 16.32,13.65 17.12,15.98 15.98,17.12 13.65,16.32 12.50,16.86 11.61,19.16 10.00,19.30 8.73,17.19 7.50,16.86 5.35,18.05 4.02,17.12 4.41,14.69 3.68,13.65 1.26,13.18 0.84,11.61 2.70,10.00 2.81,8.73 1.26,6.82 1.95,5.35 4.41,5.31 5.31,4.41 5.35,1.95 6.82,1.26 8.73,2.81 10.00,2.70 11.61,0.84 13.18,1.26 13.65,3.68 14.69,4.41 17.12,4.02 18.05,5.35 16.86,7.50 17.19,8.73" fill="#e8e8e8" stroke="#8a8a8a" stroke-width="1"/><circle cx="10" cy="10" r="5.5" fill="#4d7fbb" stroke="#2b4a6e" stroke-width=".7"/><path d="M8.5 7.5v5l4-2.5z" fill="#fff"/><path d="M12 12l9 7-4 .3 2.3 4.2-1.6.7-2.2-4.2-3.2 2.6z" fill="#fff" stroke="#333" stroke-width=".8"/></g>
<g transform="translate(955 16)"><path d="M2 2h20v14h-13l-5 6 1-6h-3z" fill="#eef3f8" stroke="#666" stroke-width="1"/><text x="6.8" y="13.5" font-size="13" font-weight="bold" font-family="Liberation Serif" fill="#333">T</text></g>
<g transform="translate(13 51)"><path d="M1 11l9-3 4 11-9 3z" fill="#e0622a" stroke="#b84a18" stroke-width=".6"/><path d="M3.5 7l9-2 3 12-9 2z" fill="#fdd94f" stroke="#d9b100" stroke-width=".6"/><path d="M9.5 1.5l13 2-2 12.5-13-2z" fill="#6d9fd5" stroke="#3f6ea6" stroke-width=".7"/><rect x="15" y="15" width="9" height="9" rx="1.5" fill="#57a05c"/><path d="M16.5 19.5h6M19.5 16.5v6" stroke="#fff" stroke-width="1.8"/></g>
<g transform="translate(45 51)"><circle cx="12" cy="8" r="7" fill="#8fb4de" stroke="#4d7fbb" stroke-width=".6"/><path d="M8 5l3 1 1 3-2 1zM13 4l3 1-1 3zM14 9l3 1-1 2z" fill="#2f5580"/><path d="M1.5 10l10 3v10l-10-3z" fill="#e3b600" stroke="#333" stroke-width=".8"/><path d="M11.5 13l10-3v10l-10 3z" fill="#fff27a" stroke="#333" stroke-width=".8"/><rect x="15" y="14.7" width="9" height="9" rx="1.2" fill="#c9a100"/><g stroke="#fff" stroke-width="1.2" stroke-linecap="round"><path d="M19.5 16.2v6M16.9 17.7l5.2 3M16.9 20.7l5.2 -3"/></g></g>
<g transform="translate(77 51)"><path d="M2 2.5L8.5 16 15.5 2.5h6" fill="none" stroke="#2b3f55" stroke-width="1.4"/><g fill="#fff" stroke="#2b3f55" stroke-width=".8"><path d="M2 1l1.3 1.5L2 4 .7 2.5z"/><path d="M15.5 1l1.3 1.5-1.3 1.5-1.3-1.5z"/><path d="M21.5 1l1.3 1.5-1.3 1.5-1.3-1.5z"/><circle cx="8.5" cy="16" r="1.4"/></g><rect x="15" y="14.7" width="9" height="9" rx="1.2" fill="#c9a100"/><g stroke="#fff" stroke-width="1.2" stroke-linecap="round"><path d="M19.5 16.2v6M16.9 17.7l5.2 3M16.9 20.7l5.2 -3"/></g></g>
<g transform="translate(109 51)"><path d="M1 23c3-8 9-17 20-21-1 5-4 10-9 13-2 1.2-5 1.5-7 2z" fill="#8fb4de" stroke="#4d7fbb" stroke-width=".8"/><path d="M1 23c5-7 11-14 19-20" stroke="#4d7fbb" stroke-width=".7" fill="none"/><rect x="15" y="14.7" width="9" height="9" rx="1.2" fill="#c9a100"/><g stroke="#fff" stroke-width="1.2" stroke-linecap="round"><path d="M19.5 16.2v6M16.9 17.7l5.2 3M16.9 20.7l5.2 -3"/></g></g>
<g transform="translate(141 51)"><rect x="1" y="6" width="18" height="10" rx="1.5" fill="#6d9fd5" stroke="#2b4a6e" stroke-width=".8"/><path d="M4 2v4M7 2v4M10 2v4M13 2v4M16 2v4M4 16v4M7 16v4M10 16v4M13 16v4" stroke="#2b4a6e" stroke-width="1"/><rect x="15" y="14.7" width="9" height="9" rx="1.2" fill="#c9a100"/><g stroke="#fff" stroke-width="1.2" stroke-linecap="round"><path d="M19.5 16.2v6M16.9 17.7l5.2 3M16.9 20.7l5.2 -3"/></g></g>
<g transform="translate(178 51)"><rect x="1" y="1" width="21.5" height="21.5" rx="2.5" fill="#b8d0ea" stroke="#3f6ea6" stroke-width="1"/><path d="M2 2l6.5 16L14 2" fill="none" stroke="#2b4a6e" stroke-width="1.2"/><circle cx="8.5" cy="18" r="1.5" fill="#fff" stroke="#2b4a6e" stroke-width=".8"/><rect x="15" y="14.7" width="9" height="9" rx="1.2" fill="#c9a100"/><g stroke="#fff" stroke-width="1.2" stroke-linecap="round"><path d="M19.5 16.2v6M16.9 17.7l5.2 3M16.9 20.7l5.2 -3"/></g></g>
<g transform="translate(227 51)"><polygon points="5.81994,18.7258 12.0737,3.87313 7.92632,2.12687 1.67258,16.9795" fill="#b8773d" stroke="#7a4a20" stroke-width=".7"/><polygon points="2,22 5.81994,18.7258 1.67258,16.9795" fill="#ddd" stroke="#555" stroke-width=".7"/><path d="M2 22L2.58209 20.6175" stroke="#333" stroke-width="1.2"/><polygon points="9.9598,19.8964 17.0334,4.96319 12.9666,3.03681 5.89298,17.97" fill="#e0622a" stroke="#a04010" stroke-width=".7"/><polygon points="6,23 9.9598,19.8964 5.89298,17.97" fill="#ddd" stroke="#555" stroke-width=".7"/><path d="M6 23L6.64213 21.6444" stroke="#333" stroke-width="1.2"/></g>
<g transform="translate(259 51)"><polygon points="9.37321,19.3761 19.058,3.23479 14.942,0.76521 5.25725,16.9065" fill="#fde35a" stroke="#b99400" stroke-width=".7"/><polygon points="5,22 9.37321,19.3761 5.25725,16.9065" fill="#ddd" stroke="#555" stroke-width=".7"/><path d="M5 22L5.77174 20.7138" stroke="#333" stroke-width="1.2"/></g>
<g transform="translate(291 51)"><rect x="1.5" y="1" width="19" height="18.5" rx="2" fill="#5f88b8" stroke="#3f6396" stroke-width=".8"/><rect x="4" y="2" width="13" height="6.5" fill="#ececec"/><path d="M5 3.8h11M5 5.5h11M5 7.2h11" stroke="#777" stroke-width=".7"/><rect x="5" y="13" width="10" height="6" fill="#ececec"/><rect x="6" y="14" width="2" height="4" fill="#6d9fd5"/><polygon points="15.7955,19.986 21.5628,9.89305 18.4372,8.10695 12.6698,18.1999" fill="#e0622a" stroke="#a04010" stroke-width=".7"/><polygon points="12,23 15.7955,19.986 12.6698,18.1999" fill="#ddd" stroke="#555" stroke-width=".7"/><path d="M12 23L12.7442 21.6976" stroke="#333" stroke-width="1.2"/></g>
<g transform="translate(323 51)"><g transform="translate(1 1)"><path d="M1.5 6.5C1 2.5 5 1 9 1.5 13 2 14.5 3.2 18 3c3.5-.2 5 2.2 5 5 0 3-2 4.7-4.5 4.5-3-.3-4-1.6-7-1-3.5.7-9.5 2-10-5z" fill="#8cc08a" stroke="#555" stroke-width="1" /></g><rect x="14.5" y="13.5" width="10" height="10" rx="1.2" fill="#c9a100"/><g stroke="#fff" stroke-width="1.1"><path d="M19.5 14.9v7.2M16.4 16.7l6.2 3.6M16.4 20.3l6.2 -3.6"/></g><circle cx="19.5" cy="18.5" r="1.7" fill="#c9a100" stroke="#fff" stroke-width="1"/></g>
<g transform="translate(355 51)"><rect x="1" y="1" width="5" height="5" fill="#fff" stroke="#333" stroke-width="1.4"/><circle cx="3.5" cy="3.5" r="1" fill="#333"/><path d="M6 3.5h9" stroke="#777" stroke-width="1.5"/><path d="M3.5 6L1 20" stroke="#333" stroke-width=".8"/><path d="M7 18l9-9M10 9l9 9" stroke="#e3b600" stroke-width="2.5"/><path d="M14 12l5-5" stroke="#999" stroke-width="1.5"/><path d="M8 11l3-3 2 2-3 3z" fill="#aaa"/></g>
<g transform="translate(398 51)"><rect x="1" y="2.5" width="19" height="5" fill="#fde35a" stroke="#c9a100" stroke-width="1"/><rect x="1" y="9.5" width="19" height="5" fill="#fde35a" stroke="#c9a100" stroke-width="1"/><rect x="1" y="16.5" width="19" height="5" fill="#fde35a" stroke="#c9a100" stroke-width="1"/><polygon points="11.8823,20.0356 21.6497,2.94266 18.3503,1.05734 8.58296,18.1502" fill="#e0622a" stroke="#a04010" stroke-width=".7"/><polygon points="8,23 11.8823,20.0356 8.58296,18.1502" fill="#ddd" stroke="#555" stroke-width=".7"/><path d="M8 23L8.74421 21.6976" stroke="#333" stroke-width="1.2"/></g>
<g transform="translate(430 51)"><rect x="1.5" y="2" width="11" height="12" fill="#fde35a" stroke="#c9a100" stroke-width=".8"/><path d="M3 4h16" stroke="#d52121" stroke-width="1.8"/><path d="M9 3.3h4" stroke="#d52121" stroke-width="2.5"/><path d="M4 7h14.5l-1.5 15.5h-11.5z" fill="#d52121"/><path d="M7.5 10v10M10.5 10v10M13.5 10v10M16 10v10" stroke="#f4a9a0" stroke-width="1"/></g>
<g transform="translate(462 51)"><path d="M2 2.5l14 9M1.5 8l15.5 2.5" stroke="#888" stroke-width="1.6"/><path d="M2 2.5l14 9" stroke="#ccc" stroke-width=".6"/><ellipse cx="19.5" cy="7" rx="3.3" ry="2.2" transform="rotate(-35 19.5 7)" fill="none" stroke="#c31b1b" stroke-width="1.6"/><ellipse cx="18.5" cy="15" rx="2.2" ry="3.3" transform="rotate(-35 18.5 15)" fill="none" stroke="#c31b1b" stroke-width="1.6"/></g>
<g transform="translate(494 51)"><path d="M9.5 1.5h7l3 3v13.5h-10z" fill="#f6f6f6" stroke="#aaa" stroke-width=".9"/><path d="M3 6.5h7l3 3v13h-10z" fill="#fff" stroke="#555" stroke-width="1.1"/><path d="M5 12h6M5 14.5h6M5 17h6M5 19.5h5" stroke="#555" stroke-width=".8"/></g>
<g transform="translate(526 51)"><rect x="1.5" y="3" width="15" height="20" fill="#f4dfb0" stroke="#c9913a" stroke-width="1"/><path d="M4 6h7l3 3v12h-10z" fill="#fff" stroke="#555" stroke-width="1"/><rect x="4.5" y="1" width="9" height="4" rx="1" fill="#999" stroke="#666" stroke-width=".6"/><path d="M6 11h6M6 13.5h6M6 16h6M6 18.5h6" stroke="#555" stroke-width=".8"/></g>
<g transform="translate(558 51)"><path d="M1 10l7-7.5V7c7-.5 11 3 11 7.5 0 4-3 7-7 7.5l-.5-3.5c2.5-.5 4-2 4-4 0-2.5-3-4.5-7.5-4v5z" fill="#e5793a"/></g>
<g transform="translate(590 51)"><path d="M23 10l-7-7.5V7c-7-.5-11 3-11 7.5 0 4 3 7 7 7.5l.5-3.5c-2.5-.5-4-2-4-4 0-2.5 3-4.5 7.5-4v5z" fill="#dcdcdc"/></g>
<g transform="translate(633 51)"><path d="M1.5 9.75l5.25 -5.25h14.25v10.5h-14.25z" fill="#fde35a" stroke="#c9a100" stroke-width="1"/><text x="6.75" y="12.8" font-size="8.5" font-weight="bold" font-family="Liberation Sans" fill="#222" textLength="12.5" lengthAdjust="spacingAndGlyphs">abc</text></g>
<g transform="translate(665 51)"><circle cx="8.5" cy="9" r="7" fill="#1aa34a" stroke="#333" stroke-width=".7"/><path d="M8.5 9V2a7 7 0 0 1 6.5 4.5z" fill="#f5d000"/><path d="M8.5 9L15 6.5a7 7 0 0 1-3 8.5z" fill="#c31b1b"/><rect x="10" y="17" width="3" height="6" fill="#f5d000"/><rect x="13.5" y="12" width="3" height="11" fill="#1aa34a" stroke="#333" stroke-width=".5"/><rect x="17" y="18" width="3" height="5" fill="#c31b1b"/></g>
<g transform="translate(703 51)"><path d="M1 9.75l5.25 -5.25h14.75v10.5h-14.75z" fill="#cfe3f7" stroke="#4d9de0" stroke-width="1"/><text x="6.25" y="12.8" font-size="8.5" font-weight="bold" font-family="Liberation Sans" fill="#222" textLength="9" lengthAdjust="spacingAndGlyphs">ab</text><circle cx="18.5" cy="17.5" r="4.5" fill="#a51d1d"/><path d="M17.5 6v8" stroke="#888" stroke-width="1.5"/></g>
<g transform="translate(735 51)"><path d="M1.5 9.75l5.25 -5.25h14.75v10.5h-14.75z" fill="#fff" stroke="#e32020" stroke-width="1"/><text x="6.75" y="12.8" font-size="8.5" font-weight="bold" font-family="Liberation Sans" fill="#e32020" textLength="12.5" lengthAdjust="spacingAndGlyphs">abc</text></g>
<g transform="translate(771 51)"><path d="M1 9.75l5.25 -5.25h14.75v10.5h-14.75z" fill="#ebebe6" stroke="#d6d6cf" stroke-width="1"/><text x="6.25" y="12.8" font-size="8.5" font-weight="bold" font-family="Liberation Sans" fill="#c8c8c0" textLength="12.5" lengthAdjust="spacingAndGlyphs">abc</text><circle cx="18.5" cy="18" r="4" fill="#d3d3d3"/><path d="M17.5 6v9" stroke="#ddd" stroke-width="1.5"/></g>
<g transform="translate(803 51)"><path d="M1 9.75l5.25 -5.25h14.75v10.5h-14.75z" fill="#ebebe6" stroke="#d6d6cf" stroke-width="1"/><text x="6.25" y="12.8" font-size="8.5" font-weight="bold" font-family="Liberation Sans" fill="#c8c8c0" textLength="12.5" lengthAdjust="spacingAndGlyphs">abc</text><path d="M8 19c3-3.5 10-3.5 13 0-3 3.5-10 3.5-13 0z" fill="#eee" stroke="#ccc" stroke-width=".8"/><circle cx="14.5" cy="19" r="1.8" fill="#ccc"/></g>
<g transform="translate(835 51)"><path d="M1 9.75l5.25 -5.25h14.75v10.5h-14.75z" fill="#ebebe6" stroke="#d6d6cf" stroke-width="1"/><text x="6.25" y="12.8" font-size="8.5" font-weight="bold" font-family="Liberation Sans" fill="#c8c8c0" textLength="12.5" lengthAdjust="spacingAndGlyphs">abc</text><rect x="13" y="13" width="9" height="9" rx="1.5" fill="#d4d4d4"/><path d="M14.5 17.5h4M17 15.5l2.5 2-2.5 2" stroke="#fff" stroke-width="1.5" fill="none"/></g>
<g transform="translate(867 51)"><path d="M1 9.75l5.25 -5.25h14.75v10.5h-14.75z" fill="#ebebe6" stroke="#d6d6cf" stroke-width="1"/><text x="6.25" y="12.8" font-size="8.5" font-weight="bold" font-family="Liberation Sans" fill="#c8c8c0" textLength="12.5" lengthAdjust="spacingAndGlyphs">abc</text><rect x="13" y="13" width="9" height="9" rx="1.5" fill="#d4d4d4"/><circle cx="17.5" cy="17.5" r="2.3" stroke="#fff" stroke-width="1.3" fill="none"/></g>
<g transform="translate(899 51)"><path d="M1 9.75l5.25 -5.25h14.75v10.5h-14.75z" fill="#ebebe6" stroke="#d6d6cf" stroke-width="1"/><text x="6.25" y="12.8" font-size="8.5" font-weight="bold" font-family="Liberation Sans" fill="#c8c8c0" textLength="12.5" lengthAdjust="spacingAndGlyphs">abc</text><rect x="13" y="13" width="9" height="9" rx="1.5" fill="#d8d6cc"/><path d="M15 20l5-5" stroke="#fff" stroke-width="1.5"/></g>
<g transform="translate(968 51)"><rect x="2" y="1" width="19" height="21" fill="#d4d4d4" stroke="#c2c2c2" stroke-width=".8"/><rect x="2" y="1" width="3.5" height="21" fill="#bdbdbd"/><text x="10" y="16" font-size="13" font-family="Liberation Sans" fill="#f2f2f2">?</text></g>
<g transform="translate(13 86)"><path d="M1.5 1.5v21.5h22z" fill="#e8e6df" stroke="#cfccc2" stroke-width="1"/><path d="M6 12v7h7z" fill="#f4f4f2" stroke="#cfccc2" stroke-width=".8"/><rect x="15" y="2" width="8" height="19" fill="#e8e6df" stroke="#cfccc2" stroke-width=".8"/></g>
<g transform="translate(45 86)"><path d="M1.5 6.5C1 2.5 5 1 9 1.5 13 2 14.5 3.2 18 3c3.5-.2 5 2.2 5 5 0 3-2 4.7-4.5 4.5-3-.3-4-1.6-7-1-3.5.7-9.5 2-10-5z" fill="#8cc08a" stroke="#555" stroke-width="1" /><rect x="13" y="13" width="10.5" height="10.5" rx="1.5" fill="#2d4f73"/><path d="M14.5 16.8h4v-2.3l3.3 3.8-3.3 3.8v-2.3h-4z" fill="#fff"/></g>
<g transform="translate(88 86)"><path d="M1.5 6.5C1 2.5 5 1 9 1.5 13 2 14.5 3.2 18 3c3.5-.2 5 2.2 5 5 0 3-2 4.7-4.5 4.5-3-.3-4-1.6-7-1-3.5.7-9.5 2-10-5z" fill="#8cc08a" stroke="#555" stroke-width="1" /><rect x="13" y="13" width="10.5" height="10.5" rx="1.5" fill="#2d4f73"/><circle cx="18.2" cy="18.2" r="2.8" fill="none" stroke="#fff" stroke-width="1.6"/><path d="M18 21.5l2.5-1-1.5-2z" fill="#fff"/></g>
<g transform="translate(120 86)"><circle cx="8.5" cy="8" r="7" fill="#8cc08a" stroke="#555" stroke-width="1"/><path d="M9 22.5l-4.5-7.5 4.5-7.5h8l4.5 7.5-4.5 7.5z" fill="#a9c4e0" stroke="#6c8fb5" stroke-width=".8"/><path d="M8 7l6 6" stroke="#333" stroke-width="1"/><path d="M14.5 13.5l-3-.5 2.5-2.5z" fill="#333"/></g>
<g transform="translate(152 86)"><path d="M1.5 6.5C1 2.5 5 1 9 1.5 13 2 14.5 3.2 18 3c3.5-.2 5 2.2 5 5 0 3-2 4.7-4.5 4.5-3-.3-4-1.6-7-1-3.5.7-9.5 2-10-5z" fill="#8cc08a" stroke="#555" stroke-width="1" /><ellipse cx="8" cy="5.5" rx="4.5" ry="2.5" transform="rotate(-10 8 5.5)" fill="#fff" stroke="#555" stroke-width=".9"/><rect x="13.5" y="13" width="10" height="10" rx="1.2" fill="#c9a100"/><g stroke="#fff" stroke-width="1.1"><path d="M18.5 14.4v7.2M15.4 16.2l6.2 3.6M15.4 19.8l6.2 -3.6"/></g><circle cx="18.5" cy="18" r="1.7" fill="#c9a100" stroke="#fff" stroke-width="1"/></g>
<g transform="translate(184 86)"><path d="M1.5 6.5C1 2.5 5 1 9 1.5 13 2 14.5 3.2 18 3c3.5-.2 5 2.2 5 5 0 3-2 4.7-4.5 4.5-3-.3-4-1.6-7-1-3.5.7-9.5 2-10-5z" fill="#b9b9b9" stroke="#555" stroke-width="1" /><path d="M2 20c1-4 5-7 8-7.5 2 .5 1 5-.5 7.5-2 3-8 3-7.5 0z" fill="#8cc08a" stroke="#555" stroke-width=".9"/><rect x="13.5" y="13" width="10" height="10" rx="1.2" fill="#c9a100"/><g stroke="#fff" stroke-width="1.1"><path d="M18.5 14.4v7.2M15.4 16.2l6.2 3.6M15.4 19.8l6.2 -3.6"/></g><circle cx="18.5" cy="18" r="1.7" fill="#c9a100" stroke="#fff" stroke-width="1"/></g>
<g transform="translate(216 86)"><path d="M1.5 6.5C1 2.5 5 1 9 1.5 13 2 14.5 3.2 18 3c3.5-.2 5 2.2 5 5 0 3-2 4.7-4.5 4.5-3-.3-4-1.6-7-1-3.5.7-9.5 2-10-5z" fill="#b9b9b9" stroke="#555" stroke-width="1" /><ellipse cx="8" cy="5.5" rx="4.5" ry="2.8" transform="rotate(-10 8 5.5)" fill="#8cc08a" stroke="#555" stroke-width=".9"/><rect x="13.5" y="13" width="10" height="10" rx="1.2" fill="#c9a100"/><g stroke="#fff" stroke-width="1.1"><path d="M18.5 14.4v7.2M15.4 16.2l6.2 3.6M15.4 19.8l6.2 -3.6"/></g><circle cx="18.5" cy="18" r="1.7" fill="#c9a100" stroke="#fff" stroke-width="1"/></g>
<g transform="translate(248 86)"><path d="M1.5 6.5C1 2.5 5 1 9 1.5 13 2 14.5 3.2 18 3c3.5-.2 5 2.2 5 5 0 3-2 4.7-4.5 4.5-3-.3-4-1.6-7-1-3.5.7-9.5 2-10-5z" fill="#8cc08a" stroke="#555" stroke-width="1" /><ellipse cx="8" cy="5.5" rx="4.5" ry="2.5" transform="rotate(-10 8 5.5)" fill="#fff" stroke="#555" stroke-width=".9"/><rect x="13.5" y="13.5" width="9.5" height="9.5" rx="1.5" fill="#d9534f"/><path d="M15.75 15.75l5 5M20.75 15.75l-5 5" stroke="#fff" stroke-width="1.8"/></g>
<g transform="translate(280 86)"><path d="M1.5 6.5C1 2.5 5 1 9 1.5 13 2 14.5 3.2 18 3c3.5-.2 5 2.2 5 5 0 3-2 4.7-4.5 4.5-3-.3-4-1.6-7-1-3.5.7-9.5 2-10-5z" fill="#b9b9b9" stroke="#555" stroke-width="1" /><path d="M2 20c1-4 5-7 8-7.5 2 .5 1 5-.5 7.5-2 3-8 3-7.5 0z" fill="#8cc08a" stroke="#555" stroke-width=".9"/><rect x="13.5" y="13.5" width="9.5" height="9.5" rx="1.5" fill="#d9534f"/><path d="M15.75 15.75l5 5M20.75 15.75l-5 5" stroke="#fff" stroke-width="1.8"/></g>
<g transform="translate(312 86)"><path d="M1.5 6.5C1 2.5 5 1 9 1.5 13 2 14.5 3.2 18 3c3.5-.2 5 2.2 5 5 0 3-2 4.7-4.5 4.5-3-.3-4-1.6-7-1-3.5.7-9.5 2-10-5z" fill="#8cc08a" stroke="#555" stroke-width="1" /><path d="M2 8c.5 3 1 9 3.5 12 1.5 1.5 2.5-4.5 3.5-8z" fill="#e3c23c" stroke="#555" stroke-width=".8"/></g>
<g transform="translate(344 86)"><path d="M4.5 21.5C1 20 .5 16 2.5 13.5 4.5 11 8 10.5 10 8 12 5.5 13 2 16.5 1.5 20 1 23 3.5 22.5 7c-.5 3-3.5 4.5-5.5 6.5-2 2-3 5.5-5.5 7.5-2 1.5-4.5 1.5-7 .5z" fill="#e0c030" stroke="#555" stroke-width="1"/><path d="M5 19C3 18 3 15.5 4.5 14 6.5 12.5 9.5 12 11.5 9.5 13.5 7 14 4 16.5 3.8 19 3.5 21 5 20.5 7.2c-.5 2.2-3 3.5-4.8 5.3-1.8 1.8-2.5 4.5-4.5 6-1.8 1.3-4 1.3-6.2.5z" fill="#8cc08a"/></g>
<g transform="translate(376 86)"><path d="M2.5 3l7 13 6-7.5h5" fill="none" stroke="#dadada" stroke-width="1"/><g fill="#fff" stroke="#d6d6d6" stroke-width=".9"><rect x="1" y="1.5" width="3" height="3"/><rect x="8" y="15" width="3" height="3"/><rect x="14" y="7" width="3" height="3"/><rect x="20" y="7" width="3" height="3"/></g><rect x="13" y="13" width="10" height="10" rx="1.5" fill="#ececec" stroke="#d2d2d2" stroke-width=".8"/><circle cx="18" cy="18" r="2.5" fill="none" stroke="#d0d0d0" stroke-width="1.2"/></g>
<g transform="translate(408 86)"><path d="M1 11.5h22" stroke="#aaa" stroke-width="1.5"/><path d="M10 1v10" stroke="#2a8a3a" stroke-width="1.3" stroke-dasharray="1.5 .7"/><path d="M10 12v7" stroke="#e33" stroke-width="1"/><path d="M16 12v11" stroke="#2a8a3a" stroke-width="1.3"/><rect x="8.5" y="10" width="3" height="3" fill="#fff" stroke="#555" stroke-width="1"/><rect x="14.5" y="10" width="3" height="3" fill="#fff" stroke="#555" stroke-width="1"/><rect x="15.5" y="1.5" width="7" height="7" rx="1" fill="#c9a100"/><circle cx="19" cy="5" r="1.3" fill="#fff"/><rect x="1" y="15.5" width="7" height="7" rx="1.5" fill="#d9534f"/><path d="M2 16.5l5 5M7 16.5l-5 5" stroke="#fff" stroke-width="1.8"/></g>
<g transform="translate(440 86)"><path d="M1 8c0-4 3-6.5 6.5-6.5 3 0 4 2 4 5 0 3-2 6-5 6-3 0-5.5-1.5-5.5-4.5z" fill="#b9b9b9" stroke="#555" stroke-width="1"/><path d="M12 3c3-2 9-1.5 9.5 3 .5 4-2 6.5-5 6.5-3 0-5-3-4.5-9.5z" fill="#8cc08a" stroke="#555" stroke-width="1"/><path d="M11.5 1.5L9 17M13.5 1.5l1 16" stroke="#999" stroke-width="1.2"/><ellipse cx="7.5" cy="20" rx="1.8" ry="3" transform="rotate(25 7.5 20)" fill="none" stroke="#c31b1b" stroke-width="1.4"/><ellipse cx="16" cy="19.5" rx="1.8" ry="3" transform="rotate(-25 16 19.5)" fill="none" stroke="#c31b1b" stroke-width="1.4"/></g>
<g transform="translate(472 86)"><path d="M1 8c0-4 3-6.5 6.5-6.5 3 0 4 2 4 5 0 3-2 6-5 6-3 0-5.5-1.5-5.5-4.5z" fill="#e2e2e2" stroke="#d4d4d4" stroke-width="1"/><path d="M12 3c3-2 9-1.5 9.5 3 .5 4-2 6.5-5 6.5-3 0-5-3-4.5-9.5z" fill="#e2e2e2" stroke="#d4d4d4" stroke-width="1"/><path d="M11.5 1.5L9 17M13.5 1.5l1 16" stroke="#ddd" stroke-width="1.2"/><ellipse cx="7.5" cy="20" rx="1.8" ry="3" transform="rotate(25 7.5 20)" fill="none" stroke="#d8d8d8" stroke-width="1.4"/><ellipse cx="16" cy="19.5" rx="1.8" ry="3" transform="rotate(-25 16 19.5)" fill="none" stroke="#d8d8d8" stroke-width="1.4"/></g>
<g transform="translate(504 86)"><path d="M1 6c0-4 3-5 6-5 4 0 5 2 5 5s-2 6-5 6c-3 0-6-2-6-6z" fill="#8cc08a" stroke="#555" stroke-width="1"/><path d="M12 4c2-3 10-3 10.5 3 .3 4-2 6-4.5 6-3 0-5.5-3-6-9z" fill="#8cc08a" stroke="#555" stroke-width="1"/><path d="M9 5h6M9 7.5h6M10.5 3.5v5.5M13.5 3.5v5.5" stroke="#333" stroke-width=".9"/><path d="M6 12c0 4 3 7 7 10" fill="none" stroke="#444" stroke-width="1"/></g>
<g transform="translate(536 86)"><g stroke="#666" stroke-width="1" fill="none"><path d="M1 1.5h20M1 6h8M13 6h8M1 8.5h20M1 13h8M13 13h8M1 15.5h20M1 20h8M13 20h8"/><path d="M9 1.5v4.5M13 1.5v4.5M9 8.5V13M13 8.5V13M9 15.5V20M13 15.5V20"/></g><g stroke="#333" stroke-width=".8" fill="none"><path d="M7 4c1-1.5 3-1.5 4 0M12 4c1-1.5 3-1.5 4 0M7 11c1-1.5 3-1.5 4 0M12 11c1-1.5 3-1.5 4 0M7 18c1-1.5 3-1.5 4 0M12 18c1-1.5 3-1.5 4 0"/></g></g>
<g transform="translate(568 86)"><path d="M11 1.5l7 4-7 4z" fill="#dedede" stroke="#ccc" stroke-width=".6"/><path d="M11 1v14" stroke="#ddd" stroke-width="1"/><path d="M6.5 22.5l4.5-8 4.5 8z" fill="#f1f1f1" stroke="#ddd" stroke-width=".8"/><path d="M6 16c-3-4-1-10 3.5-11.5" fill="none" stroke="#d8d8d8" stroke-width="1"/><path d="M9 3l1.5 1.5L8.5 6" fill="none" stroke="#d8d8d8" stroke-width="1"/></g>
<g transform="translate(623 86)"><path d="M9.9 2.6L17.4 10.1A5.3 5.3 0 0 1 9.9 17.6L2.4 10.1" fill="none" stroke="#d20f0f" stroke-width="5.6"/><path d="M9.9 2.6l2.3 2.3M2.4 10.1l2.3 2.3" stroke="#fff" stroke-width="3.4"/><path d="M7.9 4.6l2-2 4.3 4.3-2 2zM.4 12.1l2-2 4.3 4.3-2 2z" fill="none" stroke="#d20f0f" stroke-width=".8"/></g>
<g transform="translate(657 86)"><path d="M3 2v19M3 11l8-8M3 16l7-5h9M11 3h7" stroke="#e0e0e0" stroke-width="1.2" fill="none"/><g fill="#f4f4f4" stroke="#dadada" stroke-width=".9"><circle cx="3" cy="2.5" r="1.6"/><circle cx="11" cy="3" r="1.6"/><circle cx="18" cy="3" r="1.6"/><circle cx="10" cy="11" r="1.6"/><circle cx="19" cy="11" r="1.6"/><circle cx="3" cy="11" r="1.6"/><circle cx="3" cy="21" r="1.6"/></g></g>
<g transform="translate(912 86)"><path d="M7 13L1.5 1.5M7 13l11-4.5M7 13v10" stroke="#5aaa5a" stroke-width="1.8"/><rect x="5.3" y="11.3" width="3.5" height="3.5" fill="#aaa" stroke="#777" stroke-width=".8"/></g>
<g transform="translate(944 86)"><path d="M11 3c4-2.5 10-1.5 11 2.5 1 3.5-.5 6.5-4 6.5-3.5 0-5 .5-6.5-2z" fill="#b9b9b9" stroke="#555" stroke-width="1"/><path d="M2.5 6.5C1 3.5 4 .5 8 1c4 .3 7 2.5 7 6 0 3 1.5 5.5 3 8.5 1 2.5-1 6.5-4 6.5-2.5 0-3-2-4.5-4.5C7.5 14 4.5 10 2.5 6.5z" fill="#8cc08a" stroke="#333" stroke-width="1.2"/><g fill="#d2ead2"><circle cx="7" cy="5" r=".6"/><circle cx="10" cy="4" r=".6"/><circle cx="9" cy="7" r=".6"/><circle cx="6" cy="8" r=".6"/></g><circle cx="10.5" cy="8" r=".7" fill="#e3c23c"/></g>
<g transform="translate(976 86)"><path d="M2 2l20 20M22 2L2 22" stroke="#dcdcdc" stroke-width="1.5"/><circle cx="12" cy="12" r="1.3" fill="none" stroke="#ddd"/></g>
<g transform="translate(1008 86)"><path d="M2 22L22 2" stroke="#dcdcdc" stroke-width="1.5"/><path d="M4 4l4 5 4 2 4-1 4 9-6-4-6 1z" fill="#d8d8d0"/></g>
<g transform="translate(1050 86)"><path d="M2.5 6l6 12" stroke="#d8d8d8" stroke-width="1.5"/><path d="M2.5 6l16 8M7 22l3-4" stroke="#d8d8d8" stroke-width="1.5"/><circle cx="2.5" cy="6" r="2" fill="#f4f4f4" stroke="#d4d4d4" stroke-width="1.2"/><circle cx="8.5" cy="18" r="2" fill="#f4f4f4" stroke="#d4d4d4" stroke-width="1.2"/><path d="M11 3l7 10 3-1.5-7-10z" fill="#e4e2d8" stroke="#d8d6cc" stroke-width=".8"/></g>
<g transform="translate(13 121)"><path d="M2 19C2 10 7 3 16 2" fill="none" stroke="#8cc08a" stroke-width="1.6"/><path d="M2 19L8 8 16 2" fill="none" stroke="#bbb" stroke-width=".6"/><rect x="0.7" y="17.7" width="2.6" height="2.6" fill="#aaa" stroke="#555" stroke-width=".9"/><rect x="3.2" y="2.7" width="2.6" height="2.6" fill="#aaa" stroke="#555" stroke-width=".9"/><rect x="14.7" y="0.7" width="2.6" height="2.6" fill="#aaa" stroke="#555" stroke-width=".9"/><rect x="6.2" y="7.7" width="2.6" height="2.6" fill="#aaa" stroke="#555" stroke-width=".9"/><rect x="13" y="13.5" width="10" height="10" rx="1.2" fill="#c9a100"/><g stroke="#fff" stroke-width="1.1"><path d="M18 14.9v7.2M14.9 16.7l6.2 3.6M14.9 20.3l6.2 -3.6"/></g><circle cx="18" cy="18.5" r="1.7" fill="#c9a100" stroke="#fff" stroke-width="1"/></g>
<g transform="translate(56 121)"><circle cx="10" cy="10" r="7.5" fill="none" stroke="#8cc08a" stroke-width="2.4"/><rect x="12.7" y="2.7" width="2.6" height="2.6" fill="#aaa" stroke="#555" stroke-width=".9"/><rect x="2.7" y="13.7" width="2.6" height="2.6" fill="#aaa" stroke="#555" stroke-width=".9"/><rect x="13" y="13.5" width="10" height="10" rx="1.2" fill="#c9a100"/><g stroke="#fff" stroke-width="1.1"><path d="M18 14.9v7.2M14.9 16.7l6.2 3.6M14.9 20.3l6.2 -3.6"/></g><circle cx="18" cy="18.5" r="1.7" fill="#c9a100" stroke="#fff" stroke-width="1"/></g>
<g transform="translate(99 121)"><ellipse cx="11" cy="10" rx="8" ry="5" transform="rotate(-20 11 10)" fill="none" stroke="#8cc08a" stroke-width="2"/><rect x="1.2" y="12.2" width="2.6" height="2.6" fill="#aaa" stroke="#555" stroke-width=".9"/><rect x="6.7" y="2.7" width="2.6" height="2.6" fill="#aaa" stroke="#555" stroke-width=".9"/><rect x="8.2" y="4.7" width="2.6" height="2.6" fill="#aaa" stroke="#555" stroke-width=".9"/><rect x="13" y="13.5" width="10" height="10" rx="1.2" fill="#c9a100"/><g stroke="#fff" stroke-width="1.1"><path d="M18 14.9v7.2M14.9 16.7l6.2 3.6M14.9 20.3l6.2 -3.6"/></g><circle cx="18" cy="18.5" r="1.7" fill="#c9a100" stroke="#fff" stroke-width="1"/></g>
<g transform="translate(142 121)"><rect x="2" y="3" width="16" height="13" fill="none" stroke="#8cc08a" stroke-width="3"/><rect x="16.7" y="1.7" width="2.6" height="2.6" fill="#aaa" stroke="#555" stroke-width=".9"/><rect x="9.7" y="8.7" width="2.6" height="2.6" fill="#aaa" stroke="#555" stroke-width=".9"/><rect x="13" y="13.5" width="10" height="10" rx="1.2" fill="#c9a100"/><g stroke="#fff" stroke-width="1.1"><path d="M18 14.9v7.2M14.9 16.7l6.2 3.6M14.9 20.3l6.2 -3.6"/></g><circle cx="18" cy="18.5" r="1.7" fill="#c9a100" stroke="#fff" stroke-width="1"/></g>
<g transform="translate(185 121)"><path d="M7.5 1.5L16 3.5 15.5 15 8 18 1.5 10z" fill="none" stroke="#8cc08a" stroke-width="2.4"/><rect x="6.2" y="0.2" width="2.6" height="2.6" fill="#aaa" stroke="#555" stroke-width=".9"/><rect x="0.2" y="8.7" width="2.6" height="2.6" fill="#aaa" stroke="#555" stroke-width=".9"/><rect x="13" y="13.5" width="10" height="10" rx="1.2" fill="#c9a100"/><g stroke="#fff" stroke-width="1.1"><path d="M18 14.9v7.2M14.9 16.7l6.2 3.6M14.9 20.3l6.2 -3.6"/></g><circle cx="18" cy="18.5" r="1.7" fill="#c9a100" stroke="#fff" stroke-width="1"/></g>
<g transform="translate(240 121)"><rect x="1.5" y="1.5" width="21" height="19" fill="#ececec" stroke="#333" stroke-width="1.2" stroke-dasharray="1.8 1.2"/><rect x="2" y="2" width="14" height="13.5" fill="#fde35a" stroke="#c9a100" stroke-width="1"/><path d="M11 8l11 10-5 .3 3 5-2 1-3-5-4 3z" fill="#fff" stroke="#333" stroke-width="1"/></g>
<g transform="translate(284 121)"><rect x="5" y="8" width="14.5" height="14" fill="#fde35a" stroke="#c9a100" stroke-width="1"/><rect x="1" y="1.5" width="14.5" height="13.5" fill="#d8dce2" stroke="#777" stroke-width="1"/><rect x="3" y="4" width="10" height="3" fill="#fff" stroke="#777" stroke-width=".8"/><rect x="3" y="9" width="10" height="3" fill="#fff" stroke="#777" stroke-width=".8"/></g>
<g transform="translate(327 121)"><rect x="1" y="1.5" width="13" height="13" fill="#fde35a" stroke="#c9a100" stroke-width="1"/><rect x="5" y="5.5" width="13" height="13" fill="#fde35a" stroke="#c9a100" stroke-width="1"/><rect x="12.5" y="12.5" width="10.5" height="10.5" rx="1.5" fill="#e01d1d"/><circle cx="17.75" cy="17.75" r="3.3" fill="none" stroke="#fff" stroke-width="1.2"/><path d="M15.5 20l4.5-4.5" stroke="#fff" stroke-width="1.3"/></g>
<g transform="translate(5 164)"><path d="M1.5 1.5L8.5 16 15.5 1.5h6" fill="none" stroke="#2b3f55" stroke-width="1.5"/><g fill="#fff" stroke="#2b3f55" stroke-width=".8"><path d="M1.5 0l1.5 1.5-1.5 1.5L0 1.5z"/><path d="M15.5 0l1.5 1.5-1.5 1.5-1.5-1.5z"/><path d="M21.5 0l1.5 1.5-1.5 1.5-1.5-1.5z"/></g><circle cx="8.5" cy="16" r="1.5" fill="#fff" stroke="#2b3f55" stroke-width="1"/><rect x="15" y="15" width="9" height="9" rx="1.5" fill="#57a05c"/><path d="M16.5 19.5h6M19.5 16.5v6" stroke="#fff" stroke-width="1.8"/></g>
<g transform="translate(5 195)"><g><rect x="0" y="0" width="19.5" height="19.5" fill="#6d9fd5"/><rect x="0" y="0" width="6.5" height="6.5" fill="#243f60"/><rect x="13" y="0" width="6.5" height="6.5" fill="#243f60"/><rect x="6.5" y="6.5" width="6.5" height="6.5" fill="#243f60"/><rect x="0" y="13" width="6.5" height="6.5" fill="#243f60"/></g><rect x="15" y="15" width="9" height="9" rx="1.5" fill="#57a05c"/><path d="M16.5 19.5h6M19.5 16.5v6" stroke="#fff" stroke-width="1.8"/></g>
<g transform="translate(5 226)"><rect x="1" y="1" width="21" height="21" rx="1" fill="#8fb4de" stroke="#243f60" stroke-width="1.3"/><path d="M1 12h21M12 1v21M6.5 12v10M1 1l11 11M12 1L1 12M22 1L12 12" stroke="#243f60" stroke-width="1"/><rect x="15" y="15" width="9" height="9" rx="1.5" fill="#57a05c"/><path d="M16.5 19.5h6M19.5 16.5v6" stroke="#fff" stroke-width="1.8"/></g>
<g transform="translate(5 257)"><path d="M7 3.5c2.5-2 8-1.5 9 2 1 3.5-2 7-5 11l-1.5-.8c1.5-2 2.5-4 1-5-2 1-4.5 0-5-2.5 0-2 .5-3.5 1.5-4.7z" fill="#5d8fc7" stroke="#3f6ea6" stroke-width=".6"/><rect x="15" y="15" width="9" height="9" rx="1.5" fill="#57a05c"/><path d="M16.5 19.5h6M19.5 16.5v6" stroke="#fff" stroke-width="1.8"/></g>
<g transform="translate(5 288)"><path d="M0 23c3-8 9-17 22-21-1 5-4 10-9 13-2 1.2-5 1.5-8 2.5z" fill="#8fb4de" stroke="#3f6ea6" stroke-width=".9"/><path d="M0 23c5-7 11-14 21-20" stroke="#243f60" stroke-width=".8" fill="none"/><rect x="15" y="15" width="9" height="9" rx="1.5" fill="#57a05c"/><path d="M16.5 19.5h6M19.5 16.5v6" stroke="#fff" stroke-width="1.8"/></g>
<g transform="translate(5 319)"><rect x="1" y="0.5" width="21" height="21" rx="2.5" fill="#b8d0ea" stroke="#6d9fd5" stroke-width="1"/><path d="M2 1l6.5 16L14 1l7 0" fill="none" stroke="#2b4a6e" stroke-width="1.1"/><circle cx="8.5" cy="17" r="1.5" fill="#fff" stroke="#2b4a6e" stroke-width=".8"/><rect x="15" y="15" width="9" height="9" rx="1.5" fill="#57a05c"/><path d="M16.5 19.5h6M19.5 16.5v6" stroke="#fff" stroke-width="1.8"/></g>
<g transform="translate(5 350)"><path d="M3 2c3-2.5 9-2.5 12 0 3-1 6 0 6.5 3 .5 4-2 6-5 6.5v5c0 2-2 2-2.5.5L13 11c-2 1-3 3.5-2.5 6.5-.5 1.5-2.5 1.5-3 0l-.5-6c-3-.5-5-3-5.5-5C1 4.5 1.5 3 3 2z" fill="#5d8fc7" stroke="#2b4a6e" stroke-width="1"/><path d="M10 3c-1 2 0 5 3 7" fill="none" stroke="#2b4a6e" stroke-width=".8"/><rect x="15" y="15" width="9" height="9" rx="1.5" fill="#57a05c"/><path d="M16.5 19.5h6M19.5 16.5v6" stroke="#fff" stroke-width="1.8"/></g>
<g transform="translate(5 381)"><circle cx="11" cy="11" r="10" fill="#a9c4e0" stroke="#3f6ea6" stroke-width="1"/><path d="M3 8h16M2 13h18M11 1v20M5 4c4 4 4 10 0 15M17 4c-4 4-4 10 0 15" stroke="#fff" stroke-width=".8" fill="none"/><path d="M5 6h4v4H5zM12 7h4v3h-4zM7 12h3v4H7zM13 12h3v3h-3z" fill="#2b4a6e"/><rect x="15" y="15" width="9" height="9" rx="1.5" fill="#57a05c"/><path d="M16.5 19.5h6M19.5 16.5v6" stroke="#fff" stroke-width="1.8"/></g>
<g transform="translate(5 412)"><circle cx="11" cy="11" r="10" fill="#2b4a6e" stroke="#1d3350" stroke-width="1"/><path d="M2 7h18M1.5 11h19M2 15h18" stroke="#8fb4de" stroke-width="2"/><ellipse cx="11" cy="11" rx="5" ry="10" fill="none" stroke="#8fb4de" stroke-width="1.3"/><rect x="15" y="15" width="9" height="9" rx="1.5" fill="#57a05c"/><path d="M16.5 19.5h6M19.5 16.5v6" stroke="#fff" stroke-width="1.8"/></g>
<g transform="translate(5 443)"><circle cx="11" cy="11" r="10" fill="#eaf1f9" stroke="#6d9fd5" stroke-width="1"/><path d="M2 7h18M1.5 11h19M2 15h18M11 1v20" stroke="#6d9fd5" stroke-width=".8"/><ellipse cx="11" cy="11" rx="5" ry="10" fill="none" stroke="#6d9fd5" stroke-width=".8"/><path d="M3 5l5 11 5-11h5" fill="none" stroke="#2b3f55" stroke-width="1.3"/><g fill="#fff" stroke="#2b3f55" stroke-width=".8"><circle cx="8" cy="16" r="1.3"/><circle cx="13" cy="5" r="1.3"/><circle cx="18" cy="5" r="1.3"/></g><rect x="15" y="15" width="9" height="9" rx="1.5" fill="#57a05c"/><path d="M16.5 19.5h6M19.5 16.5v6" stroke="#fff" stroke-width="1.8"/></g>
<g transform="translate(5 474)"><rect x="1" y="6" width="19" height="11" rx="1.5" fill="#6d9fd5" stroke="#2b4a6e" stroke-width=".8"/><path d="M4 2v4M7 2v4M10 2v4M13 2v4M16 2v4M4 17v4M7 17v4M10 17v4M13 17v4" stroke="#2b4a6e" stroke-width="1"/><rect x="15" y="15" width="9" height="9" rx="1.2" fill="#c9a100"/><g stroke="#fff" stroke-width="1.2" stroke-linecap="round"><path d="M19.5 16.5v6M16.9 18l5.2 3M16.9 21l5.2 -3"/></g></g>
<g transform="translate(52 174)"><path d="M2 10l5-4 6 5-4 4z" fill="#e0622a"/><path d="M1 9l5-4 4 3-5 4z" fill="#f5d000"/><path d="M1 9l3-2 3 2-3 2z" fill="#4d7fbb"/><path d="M4 11l6-5 5 5-4 4z" fill="#d9a86a" stroke="#a9783a" stroke-width=".6"/><path d="M10 8l5-6" stroke="#d9a86a" stroke-width="2"/></g>
<g transform="translate(76 174)"><path d="M1 5h3v10h8v-2" fill="none" stroke="#777" stroke-width="1"/><rect x="4" y="2" width="8" height="11" fill="#fff" stroke="#777" stroke-width="1"/><path d="M7 1v8c0 2 3 2 3 0V3" fill="none" stroke="#4d7fbb" stroke-width="1.2"/><circle cx="12" cy="13" r="3" fill="#57a05c"/><circle cx="12" cy="13" r="1.3" fill="#fff"/></g>
<g transform="translate(100 174)"><path d="M0.5 8C3.5 2.5 13.5 2.5 16.5 8 13.5 13.5 3.5 13.5.5 8z" fill="#eee" stroke="#b0b0b0" stroke-width="1"/><circle cx="8.5" cy="8" r="4" fill="#6d9fd5" stroke="#4d7fbb" stroke-width=".5"/><circle cx="8.5" cy="7.5" r="1.4" fill="#111"/><path d="M13.5 14.5h4l-2 2z" fill="#555"/></g>
<g transform="translate(125 174)"><path d="M0.5 1h14v2l-5 6v6.5l-4-1.5v-5l-5-6z" fill="#6d9fd5" stroke="#4d7fbb" stroke-width=".6"/><rect x="0.5" y="1" width="14" height="1.8" fill="#f5d000"/></g>
<g transform="translate(150 174)"><path d="M8 2.2C6.3 0 1.3.3 1.3 3.3c0 1.6 1.6 2.6 3.6 2.6-2.6 0-4.2 1.1-4.2 3.1 0 3.2 5.2 3.6 7.3 1.2" fill="none" stroke="#7a2a8a" stroke-width="1.5"/><path d="M7.5 8h7v7h-7z" fill="#9a9a9a"/><path d="M9.8 9.5v5M12.2 9.5v5" stroke="#e6e6e6" stroke-width="1.1"/></g>
<g transform="translate(184 174)"><path d="M1 1v14h4" fill="none" stroke="#888" stroke-width=".7"/><path d="M1 3h5M1 11h5" stroke="#888" stroke-width=".7"/><rect x="3" y="5" width="3" height="3" fill="#f5a800"/><rect x="3" y="10" width="3" height="3" fill="#f5a800"/><path d="M9 0v11h-3l5 5 5-5h-3V0z" fill="#6d9fd5" stroke="#3f6ea6" stroke-width=".7"/></g>
<g transform="translate(208 174)"><path d="M1 1v14h4" fill="none" stroke="#888" stroke-width=".7"/><path d="M1 3h5M1 11h5" stroke="#888" stroke-width=".7"/><rect x="3" y="5" width="3" height="3" fill="#f5a800"/><rect x="3" y="10" width="3" height="3" fill="#f5a800"/><path d="M9 16V5h-3l5-5 5 5h-3v11z" fill="#6d9fd5" stroke="#3f6ea6" stroke-width=".7"/></g>
<g transform="translate(232 174)"><rect x="1" y="1" width="11.5" height="12" fill="#fff" stroke="#777" stroke-width="1"/><rect x="9" y="11" width="6.5" height="5" rx="2" fill="#e01d1d"/><path d="M10.5 13.5h3.5" stroke="#fff" stroke-width="1.2"/></g>
<rect x="359" y="555" width="1" height="1" fill="#a6a8aa"/><rect x="359" y="558" width="1" height="1" fill="#a6a8aa"/><rect x="359" y="561" width="1" height="1" fill="#a6a8aa"/><rect x="359" y="564" width="1" height="1" fill="#a6a8aa"/><rect x="359" y="567" width="1" height="1" fill="#a6a8aa"/><rect x="359" y="570" width="1" height="1" fill="#a6a8aa"/>
<rect x="1" y="20" width="1" height="1" fill="#a6a8aa"/><rect x="4" y="20" width="1" height="1" fill="#a6a8aa"/><rect x="1" y="23" width="1" height="1" fill="#a6a8aa"/><rect x="4" y="23" width="1" height="1" fill="#a6a8aa"/><rect x="1" y="26" width="1" height="1" fill="#a6a8aa"/><rect x="4" y="26" width="1" height="1" fill="#a6a8aa"/><rect x="1" y="29" width="1" height="1" fill="#a6a8aa"/><rect x="4" y="29" width="1" height="1" fill="#a6a8aa"/><rect x="1" y="32" width="1" height="1" fill="#a6a8aa"/><rect x="4" y="32" width="1" height="1" fill="#a6a8aa"/><rect x="1" y="35" width="1" height="1" fill="#a6a8aa"/><rect x="4" y="35" width="1" height="1" fill="#a6a8aa"/>
<rect x="205" y="20" width="1" height="1" fill="#a6a8aa"/><rect x="208" y="20" width="1" height="1" fill="#a6a8aa"/><rect x="205" y="23" width="1" height="1" fill="#a6a8aa"/><rect x="208" y="23" width="1" height="1" fill="#a6a8aa"/><rect x="205" y="26" width="1" height="1" fill="#a6a8aa"/><rect x="208" y="26" width="1" height="1" fill="#a6a8aa"/><rect x="205" y="29" width="1" height="1" fill="#a6a8aa"/><rect x="208" y="29" width="1" height="1" fill="#a6a8aa"/><rect x="205" y="32" width="1" height="1" fill="#a6a8aa"/><rect x="208" y="32" width="1" height="1" fill="#a6a8aa"/><rect x="205" y="35" width="1" height="1" fill="#a6a8aa"/><rect x="208" y="35" width="1" height="1" fill="#a6a8aa"/>
<rect x="697" y="20" width="1" height="1" fill="#a6a8aa"/><rect x="700" y="20" width="1" height="1" fill="#a6a8aa"/><rect x="697" y="23" width="1" height="1" fill="#a6a8aa"/><rect x="700" y="23" width="1" height="1" fill="#a6a8aa"/><rect x="697" y="26" width="1" height="1" fill="#a6a8aa"/><rect x="700" y="26" width="1" height="1" fill="#a6a8aa"/><rect x="697" y="29" width="1" height="1" fill="#a6a8aa"/><rect x="700" y="29" width="1" height="1" fill="#a6a8aa"/><rect x="697" y="32" width="1" height="1" fill="#a6a8aa"/><rect x="700" y="32" width="1" height="1" fill="#a6a8aa"/><rect x="697" y="35" width="1" height="1" fill="#a6a8aa"/><rect x="700" y="35" width="1" height="1" fill="#a6a8aa"/>
<rect x="1" y="55" width="1" height="1" fill="#a6a8aa"/><rect x="4" y="55" width="1" height="1" fill="#a6a8aa"/><rect x="1" y="58" width="1" height="1" fill="#a6a8aa"/><rect x="4" y="58" width="1" height="1" fill="#a6a8aa"/><rect x="1" y="61" width="1" height="1" fill="#a6a8aa"/><rect x="4" y="61" width="1" height="1" fill="#a6a8aa"/><rect x="1" y="64" width="1" height="1" fill="#a6a8aa"/><rect x="4" y="64" width="1" height="1" fill="#a6a8aa"/><rect x="1" y="67" width="1" height="1" fill="#a6a8aa"/><rect x="4" y="67" width="1" height="1" fill="#a6a8aa"/><rect x="1" y="70" width="1" height="1" fill="#a6a8aa"/><rect x="4" y="70" width="1" height="1" fill="#a6a8aa"/>
<rect x="215" y="55" width="1" height="1" fill="#a6a8aa"/><rect x="218" y="55" width="1" height="1" fill="#a6a8aa"/><rect x="215" y="58" width="1" height="1" fill="#a6a8aa"/><rect x="218" y="58" width="1" height="1" fill="#a6a8aa"/><rect x="215" y="61" width="1" height="1" fill="#a6a8aa"/><rect x="218" y="61" width="1" height="1" fill="#a6a8aa"/><rect x="215" y="64" width="1" height="1" fill="#a6a8aa"/><rect x="218" y="64" width="1" height="1" fill="#a6a8aa"/><rect x="215" y="67" width="1" height="1" fill="#a6a8aa"/><rect x="218" y="67" width="1" height="1" fill="#a6a8aa"/><rect x="215" y="70" width="1" height="1" fill="#a6a8aa"/><rect x="218" y="70" width="1" height="1" fill="#a6a8aa"/>
<rect x="622" y="55" width="1" height="1" fill="#a6a8aa"/><rect x="625" y="55" width="1" height="1" fill="#a6a8aa"/><rect x="622" y="58" width="1" height="1" fill="#a6a8aa"/><rect x="625" y="58" width="1" height="1" fill="#a6a8aa"/><rect x="622" y="61" width="1" height="1" fill="#a6a8aa"/><rect x="625" y="61" width="1" height="1" fill="#a6a8aa"/><rect x="622" y="64" width="1" height="1" fill="#a6a8aa"/><rect x="625" y="64" width="1" height="1" fill="#a6a8aa"/><rect x="622" y="67" width="1" height="1" fill="#a6a8aa"/><rect x="625" y="67" width="1" height="1" fill="#a6a8aa"/><rect x="622" y="70" width="1" height="1" fill="#a6a8aa"/><rect x="625" y="70" width="1" height="1" fill="#a6a8aa"/>
<rect x="932" y="55" width="1" height="1" fill="#a6a8aa"/><rect x="935" y="55" width="1" height="1" fill="#a6a8aa"/><rect x="932" y="58" width="1" height="1" fill="#a6a8aa"/><rect x="935" y="58" width="1" height="1" fill="#a6a8aa"/><rect x="932" y="61" width="1" height="1" fill="#a6a8aa"/><rect x="935" y="61" width="1" height="1" fill="#a6a8aa"/><rect x="932" y="64" width="1" height="1" fill="#a6a8aa"/><rect x="935" y="64" width="1" height="1" fill="#a6a8aa"/><rect x="932" y="67" width="1" height="1" fill="#a6a8aa"/><rect x="935" y="67" width="1" height="1" fill="#a6a8aa"/><rect x="932" y="70" width="1" height="1" fill="#a6a8aa"/><rect x="935" y="70" width="1" height="1" fill="#a6a8aa"/>
<rect x="944" y="55" width="1" height="1" fill="#a6a8aa"/><rect x="947" y="55" width="1" height="1" fill="#a6a8aa"/><rect x="944" y="58" width="1" height="1" fill="#a6a8aa"/><rect x="947" y="58" width="1" height="1" fill="#a6a8aa"/><rect x="944" y="61" width="1" height="1" fill="#a6a8aa"/><rect x="947" y="61" width="1" height="1" fill="#a6a8aa"/><rect x="944" y="64" width="1" height="1" fill="#a6a8aa"/><rect x="947" y="64" width="1" height="1" fill="#a6a8aa"/><rect x="944" y="67" width="1" height="1" fill="#a6a8aa"/><rect x="947" y="67" width="1" height="1" fill="#a6a8aa"/><rect x="944" y="70" width="1" height="1" fill="#a6a8aa"/><rect x="947" y="70" width="1" height="1" fill="#a6a8aa"/>
<rect x="955" y="55" width="1" height="1" fill="#a6a8aa"/><rect x="958" y="55" width="1" height="1" fill="#a6a8aa"/><rect x="955" y="58" width="1" height="1" fill="#a6a8aa"/><rect x="958" y="58" width="1" height="1" fill="#a6a8aa"/><rect x="955" y="61" width="1" height="1" fill="#a6a8aa"/><rect x="958" y="61" width="1" height="1" fill="#a6a8aa"/><rect x="955" y="64" width="1" height="1" fill="#a6a8aa"/><rect x="958" y="64" width="1" height="1" fill="#a6a8aa"/><rect x="955" y="67" width="1" height="1" fill="#a6a8aa"/><rect x="958" y="67" width="1" height="1" fill="#a6a8aa"/><rect x="955" y="70" width="1" height="1" fill="#a6a8aa"/><rect x="958" y="70" width="1" height="1" fill="#a6a8aa"/>
<rect x="1000" y="55" width="1" height="1" fill="#a6a8aa"/><rect x="1003" y="55" width="1" height="1" fill="#a6a8aa"/><rect x="1000" y="58" width="1" height="1" fill="#a6a8aa"/><rect x="1003" y="58" width="1" height="1" fill="#a6a8aa"/><rect x="1000" y="61" width="1" height="1" fill="#a6a8aa"/><rect x="1003" y="61" width="1" height="1" fill="#a6a8aa"/><rect x="1000" y="64" width="1" height="1" fill="#a6a8aa"/><rect x="1003" y="64" width="1" height="1" fill="#a6a8aa"/><rect x="1000" y="67" width="1" height="1" fill="#a6a8aa"/><rect x="1003" y="67" width="1" height="1" fill="#a6a8aa"/><rect x="1000" y="70" width="1" height="1" fill="#a6a8aa"/><rect x="1003" y="70" width="1" height="1" fill="#a6a8aa"/>
<rect x="1" y="90" width="1" height="1" fill="#a6a8aa"/><rect x="4" y="90" width="1" height="1" fill="#a6a8aa"/><rect x="1" y="93" width="1" height="1" fill="#a6a8aa"/><rect x="4" y="93" width="1" height="1" fill="#a6a8aa"/><rect x="1" y="96" width="1" height="1" fill="#a6a8aa"/><rect x="4" y="96" width="1" height="1" fill="#a6a8aa"/><rect x="1" y="99" width="1" height="1" fill="#a6a8aa"/><rect x="4" y="99" width="1" height="1" fill="#a6a8aa"/><rect x="1" y="102" width="1" height="1" fill="#a6a8aa"/><rect x="4" y="102" width="1" height="1" fill="#a6a8aa"/><rect x="1" y="105" width="1" height="1" fill="#a6a8aa"/><rect x="4" y="105" width="1" height="1" fill="#a6a8aa"/>
<rect x="611" y="90" width="1" height="1" fill="#a6a8aa"/><rect x="614" y="90" width="1" height="1" fill="#a6a8aa"/><rect x="611" y="93" width="1" height="1" fill="#a6a8aa"/><rect x="614" y="93" width="1" height="1" fill="#a6a8aa"/><rect x="611" y="96" width="1" height="1" fill="#a6a8aa"/><rect x="614" y="96" width="1" height="1" fill="#a6a8aa"/><rect x="611" y="99" width="1" height="1" fill="#a6a8aa"/><rect x="614" y="99" width="1" height="1" fill="#a6a8aa"/><rect x="611" y="102" width="1" height="1" fill="#a6a8aa"/><rect x="614" y="102" width="1" height="1" fill="#a6a8aa"/><rect x="611" y="105" width="1" height="1" fill="#a6a8aa"/><rect x="614" y="105" width="1" height="1" fill="#a6a8aa"/>
<rect x="1" y="125" width="1" height="1" fill="#a6a8aa"/><rect x="4" y="125" width="1" height="1" fill="#a6a8aa"/><rect x="1" y="128" width="1" height="1" fill="#a6a8aa"/><rect x="4" y="128" width="1" height="1" fill="#a6a8aa"/><rect x="1" y="131" width="1" height="1" fill="#a6a8aa"/><rect x="4" y="131" width="1" height="1" fill="#a6a8aa"/><rect x="1" y="134" width="1" height="1" fill="#a6a8aa"/><rect x="4" y="134" width="1" height="1" fill="#a6a8aa"/><rect x="1" y="137" width="1" height="1" fill="#a6a8aa"/><rect x="4" y="137" width="1" height="1" fill="#a6a8aa"/><rect x="1" y="140" width="1" height="1" fill="#a6a8aa"/><rect x="4" y="140" width="1" height="1" fill="#a6a8aa"/>
<rect x="228" y="125" width="1" height="1" fill="#a6a8aa"/><rect x="231" y="125" width="1" height="1" fill="#a6a8aa"/><rect x="228" y="128" width="1" height="1" fill="#a6a8aa"/><rect x="231" y="128" width="1" height="1" fill="#a6a8aa"/><rect x="228" y="131" width="1" height="1" fill="#a6a8aa"/><rect x="231" y="131" width="1" height="1" fill="#a6a8aa"/><rect x="228" y="134" width="1" height="1" fill="#a6a8aa"/><rect x="231" y="134" width="1" height="1" fill="#a6a8aa"/><rect x="228" y="137" width="1" height="1" fill="#a6a8aa"/><rect x="231" y="137" width="1" height="1" fill="#a6a8aa"/><rect x="228" y="140" width="1" height="1" fill="#a6a8aa"/><rect x="231" y="140" width="1" height="1" fill="#a6a8aa"/>
<rect x="16" y="154" width="1" height="1" fill="#a6a8aa"/><rect x="16" y="157" width="1" height="1" fill="#a6a8aa"/><rect x="19" y="154" width="1" height="1" fill="#a6a8aa"/><rect x="19" y="157" width="1" height="1" fill="#a6a8aa"/><rect x="22" y="154" width="1" height="1" fill="#a6a8aa"/><rect x="22" y="157" width="1" height="1" fill="#a6a8aa"/><rect x="25" y="154" width="1" height="1" fill="#a6a8aa"/><rect x="25" y="157" width="1" height="1" fill="#a6a8aa"/><rect x="28" y="154" width="1" height="1" fill="#a6a8aa"/><rect x="28" y="157" width="1" height="1" fill="#a6a8aa"/><rect x="31" y="154" width="1" height="1" fill="#a6a8aa"/><rect x="31" y="157" width="1" height="1" fill="#a6a8aa"/>
</svg>
</body></html>
